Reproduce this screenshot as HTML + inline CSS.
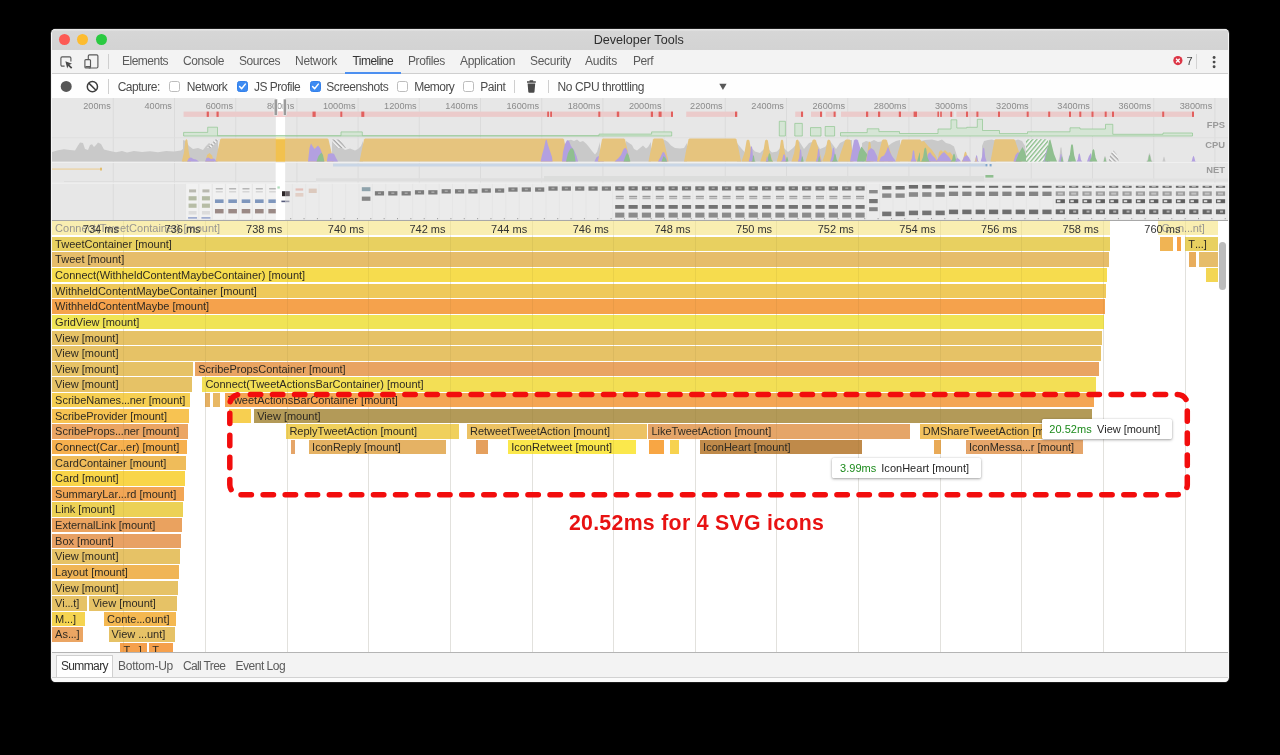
<!DOCTYPE html><html><head><meta charset="utf-8"><title>Developer Tools</title><style>
*{box-sizing:border-box}
html,body{margin:0;padding:0;background:#000;}
body{width:1280px;height:755px;position:relative;overflow:hidden;font-family:"Liberation Sans",sans-serif;}
#wbg{position:absolute;left:51.3px;top:28.8px;width:1177.6px;height:653.1px;background:#f6f6f6;border-radius:4.5px;box-shadow:0 0 0 0.8px #262626}
#win{position:absolute;left:52px;top:29px;width:1176px;height:652.7px;background:#fbfbfb;border-radius:4px;overflow:hidden;will-change:transform;}
.abs{position:absolute}
#title{position:absolute;left:0;top:0;width:1176px;height:20.5px;z-index:2;background:linear-gradient(#ebebeb,#d6d6d6 12%,#d3d3d3);}
#title .t{position:absolute;left:-1.3px;width:1176px;top:4px;text-align:center;font-size:12.6px;color:#2e2e2e;}
.tl{position:absolute;top:5px;width:10.9px;height:10.9px;border-radius:50%}
#tabs{position:absolute;left:0;top:20px;width:1176px;height:25px;background:#f3f3f3;border-bottom:1.2px solid #cfcfcf}
.tab{position:absolute;top:5.3px;font-size:12px;line-height:14px;color:#5a5a5a;white-space:nowrap}
#tbar{position:absolute;left:0;top:45px;width:1176px;height:24px;background:#fefefe;}
.tx{position:absolute;top:5.6px;font-size:12px;line-height:14px;color:#4c4c4c;white-space:nowrap}
.cb{position:absolute;top:7px;width:11px;height:11px;border:1px solid #bdbdbd;border-radius:2.5px;background:#fff}
.cb.on{background:#3d8bf2;border-color:#3380ea}
.div{position:absolute;width:1.2px;background:#cfcfcf}
#ov{position:absolute;left:0;top:69px;width:1176px;height:122px;background:#e7e7e7;}
#fl{position:absolute;left:0;top:191px;width:1176px;height:432px;background:#fff;overflow:hidden;}
.b{position:absolute;height:14.4px;font-size:11px;line-height:14.6px;color:#2e2a22;white-space:nowrap;overflow:hidden;padding-left:3.1px;}
.g{position:absolute;top:0;width:1px;height:432px;background:rgba(90,70,20,0.07)}
.g0{position:absolute;top:0;width:1.1px;height:432px;background:#ededed}
.b i{font-style:normal;letter-spacing:-0.25px;margin-right:.2px}
.rl{position:absolute;top:192.6px;font-size:11px;line-height:14px;color:#333;width:60px;text-align:right;white-space:nowrap}
#bot{position:absolute;left:0;top:622.5px;width:1176px;height:26.6px;background:#f3f3f3;border-top:1.2px solid #b4b4b4}
.bt{position:absolute;top:6.5px;font-size:12px;line-height:14px;color:#5a5a5a;white-space:nowrap}
.tip{position:absolute;background:#fff;border-radius:1.5px;box-shadow:0 1px 3px rgba(0,0,0,.34),0 0 1.5px rgba(0,0,0,.16);}
.tip span{position:absolute;font-size:11px;line-height:13px;white-space:nowrap;color:#262626}
</style></head><body>
<div id="wbg"></div>
<div id="win">
<div id="title"><div class="tl" style="left:6.85px;background:#fd5a55"></div><div class="tl" style="left:25.3px;background:#fdbc2f"></div><div class="tl" style="left:43.75px;background:#2aca41"></div><div class="t">Developer Tools</div></div>
<div id="tabs">
<svg class="abs" style="left:6px;top:3px" width="50" height="20" viewBox="58 52 50 20"><path d="M70.9 61.5V58.2a1.3 1.3 0 0 0-1.3-1.3h-7.4a1.3 1.3 0 0 0-1.3 1.3v6.6a1.3 1.3 0 0 0 1.3 1.3h2.4" fill="none" stroke="#5a5a5a" stroke-width="1.15"/><path d="M65.4 61.2l6.6 2.5-2.6 1 2.9 2.9-1.2 1.2-2.9-2.9-1 2.5z" fill="#4a4a4a"/><rect x="88.3" y="54.8" width="9.6" height="13.2" rx="1.2" fill="none" stroke="#5a5a5a" stroke-width="1.15"/><rect x="84.9" y="59.6" width="5.6" height="8.4" rx="1" fill="#f3f3f3" stroke="#5a5a5a" stroke-width="1.15"/><rect x="85.4" y="66" width="4.6" height="1.6" fill="#5a5a5a"/></svg>
<div class="div" style="left:56px;top:5px;height:14.5px"></div>
<div class="tab" style="left:70.0px;letter-spacing:-0.50px;">Elements</div>
<div class="tab" style="left:131.0px;letter-spacing:-0.43px;">Console</div>
<div class="tab" style="left:187.0px;letter-spacing:-0.43px;">Sources</div>
<div class="tab" style="left:243.0px;letter-spacing:-0.29px;">Network</div>
<div class="tab" style="left:300.5px;letter-spacing:-0.54px;color:#333;">Timeline</div>
<div class="tab" style="left:356.0px;letter-spacing:-0.38px;">Profiles</div>
<div class="tab" style="left:408.0px;letter-spacing:-0.34px;">Application</div>
<div class="tab" style="left:478.0px;letter-spacing:-0.29px;">Security</div>
<div class="tab" style="left:533.0px;letter-spacing:-0.23px;">Audits</div>
<div class="tab" style="left:581.0px;letter-spacing:-0.50px;">Perf</div>
<div class="abs" style="left:292.8px;top:23.3px;width:55.8px;height:1.9px;background:#4d90f0"></div>
<svg class="abs" style="left:1118px;top:3px" width="54" height="20" viewBox="1170 52 54 20"><circle cx="1177.9" cy="60.6" r="4.6" fill="#dc3545"/><path d="M1176.1 58.8l3.6 3.6M1179.7 58.8l-3.6 3.6" stroke="#fff" stroke-width="1.35"/><circle cx="1214.1" cy="57.5" r="1.45" fill="#4a4a4a"/><circle cx="1214.1" cy="62.1" r="1.45" fill="#4a4a4a"/><circle cx="1214.1" cy="66.7" r="1.45" fill="#4a4a4a"/></svg>
<div class="abs" style="left:1134.6px;top:5.6px;font-size:11px;line-height:13px;color:#444">7</div>
<div class="div" style="left:1144px;top:4.7px;height:15.3px;background:#d4d4d4"></div>
</div>
<div id="tbar">
<svg class="abs" style="left:6px;top:2px" width="44" height="20" viewBox="58 76 44 20"><circle cx="66.2" cy="86.4" r="5.5" fill="#565656"/><circle cx="92.4" cy="86.7" r="5.1" fill="none" stroke="#3e3e3e" stroke-width="1.5"/><path d="M88.8 83.1l7.2 7.2" stroke="#3e3e3e" stroke-width="1.5"/></svg>
<div class="div" style="left:56px;top:5px;height:14.6px"></div>
<div class="tx" style="left:65.7px;letter-spacing:-0.49px;">Capture:</div>
<div class="cb" style="left:117.0px"></div>
<div class="tx" style="left:134.8px;letter-spacing:-0.49px;">Network</div>
<div class="cb on" style="left:185.2px"><svg class="abs" style="left:-1px;top:-1px" width="11" height="11" viewBox="0 0 11 11"><path d="M2.6 5.6l2 2.1 3.7-4.6" fill="none" stroke="#fff" stroke-width="1.5" stroke-linecap="round" stroke-linejoin="round"/></svg></div>
<div class="tx" style="left:202.0px;letter-spacing:-0.51px;">JS Profile</div>
<div class="cb on" style="left:257.7px"><svg class="abs" style="left:-1px;top:-1px" width="11" height="11" viewBox="0 0 11 11"><path d="M2.6 5.6l2 2.1 3.7-4.6" fill="none" stroke="#fff" stroke-width="1.5" stroke-linecap="round" stroke-linejoin="round"/></svg></div>
<div class="tx" style="left:274.3px;letter-spacing:-0.43px;">Screenshots</div>
<div class="cb" style="left:345.3px"></div>
<div class="tx" style="left:362.3px;letter-spacing:-0.56px;">Memory</div>
<div class="cb" style="left:411.3px"></div>
<div class="tx" style="left:428.3px;letter-spacing:-0.47px;">Paint</div>
<div class="div" style="left:461.8px;top:5.6px;height:13.8px"></div>
<svg class="abs" style="left:472px;top:4px" width="16" height="16" viewBox="524 78 16 16"><path d="M529.6 80.2h3.6v1h2.6v1.6h-8.8v-1.6h2.6z" fill="#4a4a4a"/><path d="M527.6 83.6h7.6l-.7 8.2a1 1 0 0 1-1 .95h-4.2a1 1 0 0 1-1-.95z" fill="#4a4a4a"/></svg>
<div class="div" style="left:495.8px;top:5.6px;height:13.8px"></div>
<div class="tx" style="left:505.6px;letter-spacing:-0.41px;">No CPU throttling</div>
<svg class="abs" style="left:666px;top:8px" width="10" height="9" viewBox="718 82 10 9"><path d="M719.3 83.7h7.3l-3.65 6.4z" fill="#585858"/></svg>
</div>
<div id="ov"><svg class="abs" style="left:0;top:0" width="1176" height="122" viewBox="52 98 1176 122"><defs><pattern id="hg" width="3.2" height="3.2" patternUnits="userSpaceOnUse" patternTransform="rotate(-50)"><rect width="3.2" height="3.2" fill="#f2f2f2"/><rect width="3.2" height="1.3" fill="#8bbf8b"/></pattern><pattern id="hk" width="3.2" height="3.2" patternUnits="userSpaceOnUse" patternTransform="rotate(45)"><rect width="3.2" height="3.2" fill="#eeeeee"/><rect width="3.2" height="1.3" fill="#a8a8a8"/></pattern></defs><rect x="275.8" y="98" width="9.3" height="122" fill="#fff"/><rect x="112.8" y="98" width="1" height="122" fill="#dbdbdb"/><rect x="174.0" y="98" width="1" height="122" fill="#dbdbdb"/><rect x="235.2" y="98" width="1" height="122" fill="#dbdbdb"/><rect x="296.4" y="98" width="1" height="122" fill="#dbdbdb"/><rect x="357.6" y="98" width="1" height="122" fill="#dbdbdb"/><rect x="418.8" y="98" width="1" height="122" fill="#dbdbdb"/><rect x="480.0" y="98" width="1" height="122" fill="#dbdbdb"/><rect x="541.2" y="98" width="1" height="122" fill="#dbdbdb"/><rect x="602.4" y="98" width="1" height="122" fill="#dbdbdb"/><rect x="663.6" y="98" width="1" height="122" fill="#dbdbdb"/><rect x="724.8" y="98" width="1" height="122" fill="#dbdbdb"/><rect x="786.0" y="98" width="1" height="122" fill="#dbdbdb"/><rect x="847.2" y="98" width="1" height="122" fill="#dbdbdb"/><rect x="908.4" y="98" width="1" height="122" fill="#dbdbdb"/><rect x="969.6" y="98" width="1" height="122" fill="#dbdbdb"/><rect x="1030.8" y="98" width="1" height="122" fill="#dbdbdb"/><rect x="1092.0" y="98" width="1" height="122" fill="#dbdbdb"/><rect x="1153.2" y="98" width="1" height="122" fill="#dbdbdb"/><rect x="1214.4" y="98" width="1" height="122" fill="#dbdbdb"/><rect x="52" y="137.3" width="1176" height="0.9" fill="#dedede"/><rect x="52" y="162" width="1176" height="0.9" fill="#f1f1f1"/><rect x="183.6" y="111.6" width="489.3" height="5.3" fill="#ebcbcb"/><rect x="686.2" y="111.6" width="51.1" height="5.3" fill="#ebcbcb"/><rect x="795.2" y="111.6" width="8.2" height="5.3" fill="#ebcbcb"/><rect x="811" y="111.6" width="11.6" height="5.3" fill="#ebcbcb"/><rect x="825.7" y="111.6" width="10.5" height="5.3" fill="#ebcbcb"/><rect x="841" y="111.6" width="112.6" height="5.3" fill="#ebcbcb"/><rect x="956.4" y="111.6" width="237.3" height="5.3" fill="#ebcbcb"/><rect x="275.8" y="111.6" width="9.3" height="5.3" fill="#f7cfcf"/><rect x="206.7" y="111.6" width="2.2" height="5.3" fill="#e2605e"/><rect x="216.5" y="111.6" width="2.2" height="5.3" fill="#e2605e"/><rect x="312.5" y="111.6" width="3.2" height="5.3" fill="#e2605e"/><rect x="340.3" y="111.6" width="2" height="5.3" fill="#e2605e"/><rect x="361.3" y="111.6" width="3" height="5.3" fill="#e2605e"/><rect x="547.2" y="111.6" width="1.8" height="5.3" fill="#e2605e"/><rect x="550.2" y="111.6" width="1.8" height="5.3" fill="#e2605e"/><rect x="598.3" y="111.6" width="2" height="5.3" fill="#e2605e"/><rect x="616.8" y="111.6" width="2.4" height="5.3" fill="#e2605e"/><rect x="650.8" y="111.6" width="2.2" height="5.3" fill="#e2605e"/><rect x="658.6" y="111.6" width="3" height="5.3" fill="#e2605e"/><rect x="671" y="111.6" width="2" height="5.3" fill="#e2605e"/><rect x="735" y="111.6" width="2.2" height="5.3" fill="#e2605e"/><rect x="801" y="111.6" width="2" height="5.3" fill="#e2605e"/><rect x="820" y="111.6" width="2" height="5.3" fill="#e2605e"/><rect x="833.6" y="111.6" width="2" height="5.3" fill="#e2605e"/><rect x="866" y="111.6" width="2.2" height="5.3" fill="#e2605e"/><rect x="878" y="111.6" width="2.2" height="5.3" fill="#e2605e"/><rect x="898.8" y="111.6" width="2.2" height="5.3" fill="#e2605e"/><rect x="913.6" y="111.6" width="3.4" height="5.3" fill="#e2605e"/><rect x="937.4" y="111.6" width="1.6" height="5.3" fill="#e2605e"/><rect x="940.2" y="111.6" width="1.6" height="5.3" fill="#e2605e"/><rect x="950.3" y="111.6" width="1.8" height="5.3" fill="#e2605e"/><rect x="966" y="111.6" width="2" height="5.3" fill="#e2605e"/><rect x="976.4" y="111.6" width="2" height="5.3" fill="#e2605e"/><rect x="998" y="111.6" width="2" height="5.3" fill="#e2605e"/><rect x="1026.7" y="111.6" width="2" height="5.3" fill="#e2605e"/><rect x="1048.2" y="111.6" width="2" height="5.3" fill="#e2605e"/><rect x="1069" y="111.6" width="2" height="5.3" fill="#e2605e"/><rect x="1079.3" y="111.6" width="2" height="5.3" fill="#e2605e"/><rect x="1091.5" y="111.6" width="2" height="5.3" fill="#e2605e"/><rect x="1104.7" y="111.6" width="2" height="5.3" fill="#e2605e"/><rect x="1112" y="111.6" width="2" height="5.3" fill="#e2605e"/><rect x="1162.2" y="111.6" width="2" height="5.3" fill="#e2605e"/><rect x="1192" y="111.6" width="2" height="5.3" fill="#e2605e"/><path d="M183.6 136.0V132.4H207.7V127.2H217.5V135.7H341V131.9H362.3V135.7H599V134.1H651.6V131.9H671.7V136.0Z" fill="#d5e5d5" stroke="#8fc58f" stroke-width="0.7"/><path d="M779.3 136.0V121.3H785.4V136.0Z" fill="#d5e5d5" stroke="#8fc58f" stroke-width="0.7"/><path d="M794.8 136.0V123.4H802.3V136.0Z" fill="#d5e5d5" stroke="#8fc58f" stroke-width="0.7"/><path d="M810.5 136.0V127.6H821V136.0Z" fill="#d5e5d5" stroke="#8fc58f" stroke-width="0.7"/><path d="M825.2 136.0V126.5H834.6V136.0Z" fill="#d5e5d5" stroke="#8fc58f" stroke-width="0.7"/><path d="M840.5 136.0V132.6H867.2V128.8H878.9V131.6H899.5V133.5H938V129H951V119.8H956.8V128H966.8V127.3H977.3V119.3H982.5V130.5H999.5V133.6H1027.5V131.8H1070V127.8H1080V129H1105.5V124.3H1112.8V134.3H1163V133H1192.5V136.0Z" fill="#d5e5d5" stroke="#8fc58f" stroke-width="0.7"/><path d="M52.0 161.6 L52.0 152.0 L58.0 150.2 L64.0 149.3 L70.0 150.0 L75.0 150.4 L78.0 145.5 L80.0 142.6 L83.0 143.0 L85.0 149.0 L88.0 150.0 L90.0 145.0 L92.0 144.2 L94.0 147.0 L96.0 145.0 L98.0 142.4 L101.0 144.0 L104.0 149.5 L110.0 151.0 L116.0 152.2 L122.0 151.0 L127.0 152.6 L134.0 151.0 L142.0 152.0 L150.0 151.3 L158.0 152.2 L166.0 151.0 L174.0 151.6 L181.0 150.6 L184.0 148.0 L184.0 161.6Z" fill="#c9c9c9"/><path d="M183.0 161.6 L183.0 140.0 L186.0 141.0 L189.0 146.0 L193.0 149.0 L198.0 148.0 L203.0 150.0 L206.0 146.0 L209.0 143.0 L212.0 145.0 L215.0 142.0 L218.0 139.5 L218.0 161.6Z" fill="#c9c9c9"/><path d="M332.0 161.6 L332.0 140.0 L336.0 141.0 L340.0 146.0 L345.0 150.0 L350.0 148.5 L355.0 150.5 L358.0 149.0 L361.0 146.0 L363.0 141.0 L363.0 161.6Z" fill="#c9c9c9"/><path d="M567.0 161.6 L567.0 140.5 L571.0 139.8 L574.0 141.0 L577.0 139.6 L580.0 142.0 L583.0 141.0 L586.0 143.5 L589.0 147.0 L592.0 151.0 L595.0 154.5 L597.0 152.0 L600.0 142.0 L600.0 161.6Z" fill="#c9c9c9"/><path d="M626.0 161.6 L626.0 141.0 L629.0 143.0 L632.0 145.0 L634.0 149.0 L637.0 150.5 L640.0 148.0 L643.0 145.5 L646.0 148.5 L648.0 147.0 L651.0 142.0 L651.0 161.6Z" fill="#c9c9c9"/><path d="M662.0 161.6 L662.0 140.5 L665.0 140.0 L668.0 142.0 L671.0 145.5 L675.0 148.0 L680.0 148.6 L684.0 148.0 L687.0 143.0 L687.0 161.6Z" fill="#c9c9c9"/><path d="M737.0 161.6 L737.0 143.0 L741.0 148.0 L745.0 152.5 L750.0 146.0 L755.0 151.5 L760.0 153.0 L766.0 147.0 L772.0 152.5 L777.0 151.5 L782.0 146.0 L788.0 152.0 L793.0 148.0 L799.0 141.0 L804.0 149.0 L809.0 143.0 L815.0 141.0 L820.0 149.0 L825.0 147.0 L830.0 141.0 L836.0 149.0 L840.0 143.0 L846.0 140.0 L852.0 140.0 L852.0 161.6Z" fill="#c9c9c9"/><path d="M862.0 161.6 L862.0 143.0 L866.0 141.0 L870.0 142.0 L874.0 140.0 L878.0 142.0 L884.0 141.0 L884.0 161.6Z" fill="#c9c9c9"/><path d="M888.0 161.6 L888.0 146.0 L892.0 143.0 L896.0 141.0 L900.0 140.0 L900.0 161.6Z" fill="#c9c9c9"/><path d="M921.0 161.6 L921.0 141.0 L925.0 140.0 L932.0 139.6 L938.0 141.0 L942.0 139.4 L946.0 143.0 L950.0 144.0 L954.0 146.5 L957.0 156.0 L959.0 161.6 L959.0 161.6Z" fill="#c9c9c9"/><path d="M982.0 161.6 L982.0 146.0 L984.0 141.0 L988.0 140.0 L992.0 139.6 L996.0 141.0 L996.0 161.6Z" fill="#c9c9c9"/><path d="M1014.0 161.6 L1014.0 141.0 L1018.0 139.4 L1022.0 141.0 L1025.0 146.0 L1027.0 161.6 L1027.0 161.6Z" fill="#c9c9c9"/><path d="M1058.2 161.6 L1059.5 156.8 L1060.4 148.2 L1061.0 147.0 L1061.6 148.2 L1062.5 156.8 L1063.8 161.6Z" fill="#c9c9c9"/><path d="M1102.0 161.6 L1103.3 161.2 L1104.3 157.0 L1105.0 155.8 L1105.7 157.0 L1106.7 161.2 L1108.0 161.6Z" fill="#c9c9c9"/><path d="M1146.1 161.6 L1147.6 159.8 L1148.8 154.2 L1149.5 153.0 L1150.2 154.2 L1151.4 159.8 L1152.9 161.6Z" fill="#c9c9c9"/><path d="M1161.2 161.6 L1162.5 161.6 L1163.4 157.8 L1164.0 156.6 L1164.6 157.8 L1165.5 161.6 L1166.8 161.6Z" fill="#c9c9c9"/><path d="M181.8 161.6 L183.9 152.8 L185.4 140.2 L186.4 139.0 L187.4 140.2 L188.9 152.8 L191.0 161.6Z" fill="#e6c47e"/><path d="M205.6 161.6 L205.6 161.6 L207.0 155.0 L209.5 153.0 L212.0 155.5 L214.0 161.6 L214.0 161.6Z" fill="#e6c47e"/><path d="M207.0 148.0 L216.0 139.0 L219.5 139.0 L211.0 148.0Z" fill="url(#hk)"/><path d="M187.0 161.6 L187.0 161.6 L189.0 158.0 L191.0 157.4 L193.5 159.0 L196.0 159.6 L199.0 161.6 L199.0 161.6Z" fill="#b3a0e0"/><path d="M205.0 161.6 L205.0 161.6 L206.5 158.0 L208.5 157.4 L211.0 159.0 L214.0 158.6 L217.0 161.6 L217.0 161.6Z" fill="#b3a0e0"/><path d="M215.6 161.6 L217.9 150.0 L220.2 139.4 L221.2 138.4 L327.5 138.4 L328.5 139.4 L331.0 150.0 L333.5 161.6Z" fill="#e6c47e"/><path d="M308.0 161.6 L308.0 161.6 L309.5 148.0 L311.0 143.5 L312.5 146.0 L314.5 149.0 L316.5 147.0 L318.0 145.5 L320.0 148.0 L322.0 153.0 L324.3 161.6 L324.3 161.6Z" fill="#b3a0e0"/><path d="M316.5 161.6 L316.5 161.6 L318.5 156.0 L321.4 152.4 L323.0 155.0 L324.3 161.6 L324.3 161.6Z" fill="#8fbf8f"/><path d="M326.8 161.6 L326.8 161.6 L328.0 154.0 L331.0 153.2 L334.0 153.8 L336.0 158.0 L338.0 161.6 L338.0 161.6Z" fill="#b3a0e0"/><path d="M331.0 139.5 L340.0 139.5 L346.0 148.0 L337.0 148.0Z" fill="url(#hk)"/><path d="M359.5 161.6 L361.8 150.0 L364.0 139.4 L365.0 138.4 L563.0 138.4 L564.0 139.4 L566.0 150.0 L568.0 161.6Z" fill="#e6c47e"/><path d="M540.6 161.6 L540.6 161.6 L542.0 155.0 L544.0 148.0 L545.6 140.5 L546.6 139.6 L548.0 145.0 L550.0 151.0 L552.0 157.0 L552.6 161.6 L552.6 161.6Z" fill="#b3a0e0"/><path d="M562.0 161.6 L562.0 161.6 L563.0 152.0 L565.0 144.0 L567.0 140.2 L569.0 141.0 L571.0 146.0 L574.0 150.0 L576.5 156.0 L578.0 161.6 L578.0 161.6Z" fill="#b3a0e0"/><path d="M566.0 161.6 L566.0 161.6 L568.0 153.0 L570.5 148.6 L572.5 148.2 L574.0 151.0 L575.6 161.6 L575.6 161.6Z" fill="#8fbf8f"/><path d="M594.5 161.6 L594.5 161.6 L596.5 157.2 L598.5 156.0 L601.0 158.5 L604.0 161.6 L604.0 161.6Z" fill="#b3a0e0"/><path d="M598.0 161.6 L600.0 150.0 L602.0 139.4 L603.0 138.4 L624.0 138.4 L625.0 139.4 L627.5 150.0 L630.0 161.6Z" fill="#e6c47e"/><path d="M614.5 161.6 L614.5 161.6 L618.0 158.5 L621.0 155.0 L623.5 149.0 L625.5 147.8 L627.0 150.0 L628.5 156.0 L629.5 161.6 L629.5 161.6Z" fill="#b3a0e0"/><path d="M623.5 161.6 L623.5 161.6 L625.5 156.0 L627.0 152.8 L628.6 155.0 L630.4 161.6 L630.4 161.6Z" fill="#8fbf8f"/><path d="M648.5 161.6 L650.8 150.0 L653.0 139.4 L654.0 138.4 L662.5 138.4 L663.5 139.4 L666.0 150.0 L668.5 161.6Z" fill="#e6c47e"/><path d="M658.0 161.6 L658.0 161.6 L660.5 157.0 L662.5 152.6 L664.0 152.0 L665.5 155.0 L667.5 161.6 L667.5 161.6Z" fill="#b3a0e0"/><path d="M661.5 161.6 L661.5 161.6 L663.6 156.0 L665.5 158.0 L667.0 161.6 L667.0 161.6Z" fill="#8fbf8f"/><path d="M684.0 161.6 L686.2 150.0 L688.5 139.4 L689.5 138.4 L735.5 138.4 L736.5 139.4 L738.8 150.0 L741.0 161.6Z" fill="#e6c47e"/><path d="M741.5 161.6 L744.4 153.0 L746.6 140.6 L748.0 139.4 L749.4 140.6 L751.6 153.0 L754.5 161.6Z" fill="#e6c47e"/><path d="M748.7 161.6 L750.0 156.3 L750.9 147.2 L751.5 146.0 L752.1 147.2 L753.0 156.3 L754.3 161.6Z" fill="#b3a0e0"/><path d="M751.3 161.6 L752.3 160.8 L753.0 156.2 L753.5 155.0 L754.0 156.2 L754.7 160.8 L755.7 161.6Z" fill="#8fbf8f"/><path d="M760.3 161.6 L763.1 153.0 L765.1 140.6 L766.5 139.4 L767.9 140.6 L769.9 153.0 L772.7 161.6Z" fill="#e6c47e"/><path d="M765.9 161.6 L767.5 159.8 L768.7 154.2 L769.5 153.0 L770.3 154.2 L771.5 159.8 L773.1 161.6Z" fill="#8fbf8f"/><path d="M765.2 161.6 L766.1 161.3 L766.8 157.2 L767.2 156.0 L767.6 157.2 L768.3 161.3 L769.2 161.6Z" fill="#b3a0e0"/><path d="M776.8 161.6 L779.1 153.0 L780.9 140.6 L782.0 139.4 L783.1 140.6 L784.9 153.0 L787.2 161.6Z" fill="#e6c47e"/><path d="M780.5 161.6 L782.1 160.3 L783.2 155.2 L784.0 154.0 L784.8 155.2 L785.9 160.3 L787.5 161.6Z" fill="#b3a0e0"/><path d="M784.4 161.6 L785.6 161.6 L786.4 157.7 L787.0 156.5 L787.6 157.7 L788.4 161.6 L789.6 161.6Z" fill="#8fbf8f"/><path d="M791.5 161.6 L794.1 153.0 L796.0 140.6 L797.3 139.4 L798.6 140.6 L800.5 153.0 L803.1 161.6Z" fill="#e6c47e"/><path d="M797.9 161.6 L799.1 157.8 L799.9 150.2 L800.5 149.0 L801.1 150.2 L801.9 157.8 L803.1 161.6Z" fill="#b3a0e0"/><path d="M799.9 161.6 L801.0 161.3 L801.8 157.2 L802.3 156.0 L802.8 157.2 L803.6 161.3 L804.7 161.6Z" fill="#8fbf8f"/><path d="M805.5 161.6 L809.0 150.6 L812.5 140.6 L813.5 139.6 L815.0 139.6 L816.0 140.6 L819.0 150.6 L822.0 161.6Z" fill="#e6c47e"/><path d="M815.8 161.6 L817.1 157.6 L818.0 149.7 L818.6 148.5 L819.2 149.7 L820.1 157.6 L821.4 161.6Z" fill="#b3a0e0"/><path d="M817.0 161.6 L818.0 161.3 L818.7 157.2 L819.2 156.0 L819.7 157.2 L820.4 161.3 L821.4 161.6Z" fill="#8fbf8f"/><path d="M822.3 161.6 L825.2 153.0 L827.4 140.6 L828.8 139.4 L830.2 140.6 L832.4 153.0 L835.3 161.6Z" fill="#e6c47e"/><path d="M830.0 161.6 L831.5 157.1 L832.7 148.7 L833.4 147.5 L834.1 148.7 L835.3 157.1 L836.8 161.6Z" fill="#b3a0e0"/><path d="M831.8 161.6 L833.2 160.1 L834.3 154.7 L835.0 153.5 L835.7 154.7 L836.8 160.1 L838.2 161.6Z" fill="#8fbf8f"/><path d="M838.0 161.6 L841.5 150.6 L845.0 140.6 L846.0 139.6 L849.5 139.6 L850.5 140.6 L852.0 150.6 L853.5 161.6Z" fill="#e6c47e"/><path d="M850.0 161.6 L852.0 150.5 L854.0 140.4 L855.0 139.4 L857.0 139.4 L858.0 140.4 L861.0 150.5 L864.0 161.6Z" fill="#b3a0e0"/><path d="M857.0 161.6 L857.0 161.6 L859.0 152.0 L861.5 146.5 L864.0 150.0 L867.0 154.0 L870.5 161.6 L870.5 161.6Z" fill="#8fbf8f"/><path d="M865.5 161.6 L867.3 154.1 L868.6 142.7 L869.5 141.5 L870.4 142.7 L871.7 154.1 L873.5 161.6Z" fill="#e6c47e"/><path d="M866.0 161.6 L866.0 161.6 L868.0 151.0 L871.0 148.0 L874.0 150.0 L877.0 156.0 L878.5 161.6 L878.5 161.6Z" fill="#b3a0e0"/><path d="M877.0 161.6 L879.5 150.5 L882.0 140.4 L883.0 139.4 L886.0 139.4 L887.0 140.4 L890.0 150.5 L893.0 161.6Z" fill="#e6c47e"/><path d="M879.0 161.6 L879.0 161.6 L881.0 157.0 L884.0 155.5 L886.0 152.0 L888.0 146.5 L890.0 152.0 L892.0 156.0 L896.0 161.6 L896.0 161.6Z" fill="#b3a0e0"/><path d="M895.5 161.6 L898.5 150.5 L901.5 140.4 L902.5 139.4 L920.0 139.4 L921.0 140.4 L924.0 150.5 L927.0 161.6Z" fill="#e6c47e"/><path d="M910.5 161.6 L911.9 158.3 L912.8 151.2 L913.5 150.0 L914.2 151.2 L915.1 158.3 L916.5 161.6Z" fill="#b3a0e0"/><path d="M917.0 161.6 L917.0 161.6 L919.5 153.0 L922.5 148.0 L925.0 152.0 L928.0 155.0 L931.0 161.6 L931.0 161.6Z" fill="#8fbf8f"/><path d="M920.0 161.6 L920.0 142.0 L924.0 141.0 L928.0 146.0 L932.0 150.0 L936.0 156.0 L938.0 161.6 L938.0 161.6Z" fill="#e6c47e"/><path d="M937.5 161.6 L937.5 161.6 L939.0 152.0 L941.0 150.0 L943.0 152.0 L945.0 150.0 L948.0 153.0 L950.0 152.0 L953.0 156.0 L955.0 161.6 L955.0 161.6Z" fill="#e6c47e"/><path d="M926.0 161.6 L926.0 161.6 L928.0 154.0 L930.0 152.0 L932.0 155.0 L935.0 158.0 L937.0 161.6 L937.0 161.6Z" fill="#b3a0e0"/><path d="M921.3 161.6 L923.1 157.1 L924.4 148.7 L925.3 147.5 L926.2 148.7 L927.5 157.1 L929.3 161.6Z" fill="#8fbf8f"/><path d="M936.0 161.6 L936.0 161.6 L939.0 157.0 L942.0 153.5 L944.0 152.0 L946.0 154.0 L949.0 157.0 L952.0 161.6 L952.0 161.6Z" fill="#b3a0e0"/><path d="M950.4 161.6 L952.0 160.1 L953.2 154.7 L954.0 153.5 L954.8 154.7 L956.0 160.1 L957.6 161.6Z" fill="#8fbf8f"/><path d="M955.0 161.6 L955.0 161.6 L957.0 158.0 L959.0 159.0 L961.0 161.6 L961.0 161.6Z" fill="#b3a0e0"/><path d="M961.3 161.6 L963.2 159.1 L964.6 152.7 L965.5 151.5 L966.4 152.7 L967.8 159.1 L969.7 161.6Z" fill="#e6c47e"/><path d="M962.0 161.6 L962.0 161.6 L964.0 157.0 L967.0 155.0 L969.0 157.5 L971.0 161.6 L971.0 161.6Z" fill="#b3a0e0"/><path d="M974.0 161.6 L975.2 160.8 L976.0 156.2 L976.6 155.0 L977.2 156.2 L978.0 160.8 L979.2 161.6Z" fill="#b3a0e0"/><path d="M974.6 161.6 L975.2 161.8 L975.7 158.2 L976.0 157.0 L976.3 158.2 L976.8 161.8 L977.4 161.6Z" fill="#e6c47e"/><path d="M980.6 161.6 L982.0 157.1 L982.9 148.7 L983.6 147.5 L984.3 148.7 L985.2 157.1 L986.6 161.6Z" fill="#b3a0e0"/><path d="M990.5 161.6 L992.5 150.4 L994.5 140.2 L995.5 139.2 L1014.0 139.2 L1015.0 140.2 L1018.5 150.4 L1022.0 161.6Z" fill="#e6c47e"/><path d="M1013.5 161.6 L1013.5 161.6 L1015.5 155.0 L1018.0 152.0 L1020.0 154.0 L1021.0 161.6 L1021.0 161.6Z" fill="#b3a0e0"/><path d="M1015.5 161.6 L1015.5 161.6 L1019.0 153.0 L1022.5 147.0 L1025.0 152.0 L1027.5 161.6 L1027.5 161.6Z" fill="#8fbf8f"/><rect x="1026" y="139.2" width="22" height="22.4" fill="url(#hg)"/><path d="M1043.5 161.6 L1043.5 161.6 L1045.5 154.0 L1047.0 149.0 L1049.0 146.0 L1050.0 161.6 L1050.0 161.6Z" fill="#b3a0e0"/><path d="M1044.5 161.6 L1044.5 161.6 L1047.0 151.0 L1049.3 140.2 L1050.3 139.6 L1051.5 144.0 L1054.0 154.0 L1057.0 161.6 L1057.0 161.6Z" fill="#8fbf8f"/><path d="M1058.6 161.6 L1059.7 160.1 L1060.5 154.7 L1061.0 153.5 L1061.5 154.7 L1062.3 160.1 L1063.4 161.6Z" fill="#b3a0e0"/><path d="M1060.0 161.6 L1060.9 161.3 L1061.6 157.2 L1062.0 156.0 L1062.4 157.2 L1063.1 161.3 L1064.0 161.6Z" fill="#8fbf8f"/><path d="M1067.1 161.6 L1068.2 160.8 L1069.0 156.2 L1069.5 155.0 L1070.0 156.2 L1070.8 160.8 L1071.9 161.6Z" fill="#b3a0e0"/><path d="M1068.0 161.6 L1069.8 155.3 L1071.1 145.2 L1072.0 144.0 L1072.9 145.2 L1074.2 155.3 L1076.0 161.6Z" fill="#8fbf8f"/><path d="M1076.3 161.6 L1077.6 159.9 L1078.6 154.4 L1079.3 153.2 L1080.0 154.4 L1081.0 159.9 L1082.3 161.6Z" fill="#b3a0e0"/><path d="M1087.0 161.6 L1087.0 161.6 L1089.0 156.0 L1091.0 153.0 L1092.0 161.6 L1092.0 161.6Z" fill="#b3a0e0"/><path d="M1089.4 161.6 L1091.2 157.8 L1092.5 150.2 L1093.4 149.0 L1094.3 150.2 L1095.6 157.8 L1097.4 161.6Z" fill="#8fbf8f"/><path d="M1102.8 161.6 L1103.8 161.8 L1104.5 158.2 L1105.0 157.0 L1105.5 158.2 L1106.2 161.8 L1107.2 161.6Z" fill="#8fbf8f"/><path d="M1108.5 161.6 L1110.5 154.0 L1113.5 150.6 L1116.5 154.0 L1119.0 161.6Z" fill="url(#hk)"/><path d="M1146.9 161.6 L1148.1 160.6 L1148.9 155.7 L1149.5 154.5 L1150.1 155.7 L1150.9 160.6 L1152.1 161.6Z" fill="#8fbf8f"/><path d="M1190.3 161.6 L1191.7 161.2 L1192.8 157.0 L1193.5 155.8 L1194.2 157.0 L1195.3 161.2 L1196.7 161.6Z" fill="#b3a0e0"/><rect x="275.8" y="138.4" width="9.3" height="23.2" fill="#f2c14e"/><rect x="275.8" y="137.5" width="9.3" height="1.7" fill="#fbf0a6"/><rect x="52" y="168.4" width="49" height="1.4" fill="#ead3a6"/><rect x="100" y="167.7" width="2" height="2.8" fill="#e2bd6e"/><rect x="333" y="163.6" width="652" height="2.9" fill="#c9d6e6"/><rect x="985.4" y="164" width="2" height="2.4" fill="#7fa6cf"/><rect x="989.6" y="164" width="2" height="2.4" fill="#7fa6cf"/><rect x="316" y="178.2" width="228" height="3.2" fill="#dedede"/><rect x="544" y="176" width="440" height="5.4" fill="#dcdddc"/><rect x="984" y="178.4" width="244" height="3" fill="#e1e1e1"/><rect x="64" y="181.2" width="252" height="0.8" fill="#dcdcdc"/><rect x="985.4" y="175" width="8" height="2.6" fill="#8fbf8f"/><rect x="185.6" y="183.8" width="1042.4" height="36.2" fill="#e6e6e6"/><rect x="186.10" y="183.8" width="12.15" height="35.6" fill="#ebebeb"/><rect x="196.75" y="218.2" width="1" height="1" fill="#8c8c8c"/><rect x="186.10" y="183.8" width="12.15" height="35.6" fill="#f1f1f1"/><rect x="189.08" y="189.4" width="7" height="3" fill="#b9b9b0"/><rect x="188.58" y="196.2" width="8" height="4.2" fill="#b4bba4"/><rect x="188.58" y="203.6" width="8" height="4.2" fill="#b7bda6"/><rect x="188.58" y="211" width="8" height="3.6" fill="#dcdcdc"/><rect x="188.08" y="217.2" width="9" height="1.4" fill="#8c9cc8"/><rect x="199.45" y="183.8" width="12.15" height="35.6" fill="#ebebeb"/><rect x="210.10" y="218.2" width="1" height="1" fill="#8c8c8c"/><rect x="199.45" y="183.8" width="12.15" height="35.6" fill="#f1f1f1"/><rect x="202.43" y="189.4" width="7" height="3" fill="#b9b9b0"/><rect x="201.93" y="196.2" width="8" height="4.2" fill="#b4bba4"/><rect x="201.93" y="203.6" width="8" height="4.2" fill="#b7bda6"/><rect x="201.93" y="211" width="8" height="3.6" fill="#dcdcdc"/><rect x="201.43" y="217.2" width="9" height="1.4" fill="#8c9cc8"/><rect x="212.80" y="183.8" width="12.15" height="35.6" fill="#ebebeb"/><rect x="223.45" y="218.2" width="1" height="1" fill="#8c8c8c"/><rect x="212.80" y="183.8" width="12.15" height="35.6" fill="#f1f1f1"/><rect x="215.78" y="188.2" width="7" height="1.2" fill="#a9a9a9"/><rect x="215.78" y="191.4" width="7" height="0.9" fill="#c4c4c4"/><rect x="214.97" y="199.4" width="8.6" height="3.6" fill="#7f97bd"/><rect x="214.97" y="209" width="8.6" height="4.4" fill="#9b8a86"/><rect x="226.15" y="183.8" width="12.15" height="35.6" fill="#ebebeb"/><rect x="236.80" y="218.2" width="1" height="1" fill="#8c8c8c"/><rect x="226.15" y="183.8" width="12.15" height="35.6" fill="#f1f1f1"/><rect x="229.12" y="188.2" width="7" height="1.2" fill="#a9a9a9"/><rect x="229.12" y="191.4" width="7" height="0.9" fill="#c4c4c4"/><rect x="228.32" y="199.4" width="8.6" height="3.6" fill="#7f97bd"/><rect x="228.32" y="209" width="8.6" height="4.4" fill="#9b8a86"/><rect x="239.50" y="183.8" width="12.15" height="35.6" fill="#ebebeb"/><rect x="250.15" y="218.2" width="1" height="1" fill="#8c8c8c"/><rect x="239.50" y="183.8" width="12.15" height="35.6" fill="#f1f1f1"/><rect x="242.48" y="188.2" width="7" height="1.2" fill="#a9a9a9"/><rect x="242.48" y="191.4" width="7" height="0.9" fill="#c4c4c4"/><rect x="241.68" y="199.4" width="8.6" height="3.6" fill="#7f97bd"/><rect x="241.68" y="209" width="8.6" height="4.4" fill="#9b8a86"/><rect x="252.85" y="183.8" width="12.15" height="35.6" fill="#ebebeb"/><rect x="263.50" y="218.2" width="1" height="1" fill="#8c8c8c"/><rect x="252.85" y="183.8" width="12.15" height="35.6" fill="#f1f1f1"/><rect x="255.82" y="188.2" width="7" height="1.2" fill="#a9a9a9"/><rect x="255.82" y="191.4" width="7" height="0.9" fill="#c4c4c4"/><rect x="255.02" y="199.4" width="8.6" height="3.6" fill="#7f97bd"/><rect x="255.02" y="209" width="8.6" height="4.4" fill="#9b8a86"/><rect x="266.20" y="183.8" width="12.15" height="35.6" fill="#ebebeb"/><rect x="276.85" y="218.2" width="1" height="1" fill="#8c8c8c"/><rect x="266.20" y="183.8" width="12.15" height="35.6" fill="#f1f1f1"/><rect x="269.18" y="188.2" width="7" height="1.2" fill="#a9a9a9"/><rect x="269.18" y="191.4" width="7" height="0.9" fill="#c4c4c4"/><rect x="268.38" y="199.4" width="8.6" height="3.6" fill="#7f97bd"/><rect x="268.38" y="209" width="8.6" height="4.4" fill="#9b8a86"/><rect x="279.55" y="183.8" width="12.15" height="35.6" fill="#ebebeb"/><rect x="290.20" y="218.2" width="1" height="1" fill="#8c8c8c"/><rect x="292.90" y="183.8" width="12.15" height="35.6" fill="#ebebeb"/><rect x="303.55" y="218.2" width="1" height="1" fill="#8c8c8c"/><rect x="295.57" y="188.4" width="7.6" height="2.2" fill="#e3bfb8"/><rect x="295.38" y="193" width="8" height="3.6" fill="#e2cfc6"/><rect x="306.25" y="183.8" width="12.15" height="35.6" fill="#ebebeb"/><rect x="316.90" y="218.2" width="1" height="1" fill="#8c8c8c"/><rect x="308.73" y="188.6" width="8" height="4.4" fill="#dcc9bd"/><rect x="319.60" y="183.8" width="12.15" height="35.6" fill="#ebebeb"/><rect x="330.25" y="218.2" width="1" height="1" fill="#8c8c8c"/><rect x="332.95" y="183.8" width="12.15" height="35.6" fill="#ebebeb"/><rect x="343.60" y="218.2" width="1" height="1" fill="#8c8c8c"/><rect x="346.30" y="183.8" width="12.15" height="35.6" fill="#ebebeb"/><rect x="356.95" y="218.2" width="1" height="1" fill="#8c8c8c"/><rect x="359.65" y="183.8" width="12.15" height="35.6" fill="#ebebeb"/><rect x="370.30" y="218.2" width="1" height="1" fill="#8c8c8c"/><rect x="361.82" y="187.2" width="8.6" height="4" fill="#8fa3ac"/><rect x="361.82" y="196.6" width="8.6" height="4.2" fill="#868686"/><rect x="373.00" y="183.8" width="12.15" height="35.6" fill="#ebebeb"/><rect x="383.65" y="218.2" width="1" height="1" fill="#8c8c8c"/><rect x="374.88" y="191.2" width="9.2" height="4.3" fill="#7c7c7c"/><rect x="377.98" y="192.39999999999998" width="3" height="1.6" fill="#a8a8a8"/><rect x="386.35" y="183.8" width="12.15" height="35.6" fill="#ebebeb"/><rect x="397.00" y="218.2" width="1" height="1" fill="#8c8c8c"/><rect x="388.23" y="191.2" width="9.2" height="4.3" fill="#7c7c7c"/><rect x="391.33" y="192.39999999999998" width="3" height="1.6" fill="#a8a8a8"/><rect x="399.70" y="183.8" width="12.15" height="35.6" fill="#ebebeb"/><rect x="410.35" y="218.2" width="1" height="1" fill="#8c8c8c"/><rect x="401.57" y="191.2" width="9.2" height="4.3" fill="#7c7c7c"/><rect x="404.68" y="192.39999999999998" width="3" height="1.6" fill="#a8a8a8"/><rect x="413.05" y="183.8" width="12.15" height="35.6" fill="#ebebeb"/><rect x="423.70" y="218.2" width="1" height="1" fill="#8c8c8c"/><rect x="414.92" y="190.2" width="9.2" height="4.3" fill="#7c7c7c"/><rect x="418.02" y="191.39999999999998" width="3" height="1.6" fill="#a8a8a8"/><rect x="426.40" y="183.8" width="12.15" height="35.6" fill="#ebebeb"/><rect x="437.05" y="218.2" width="1" height="1" fill="#8c8c8c"/><rect x="428.27" y="190.2" width="9.2" height="4.3" fill="#7c7c7c"/><rect x="431.38" y="191.39999999999998" width="3" height="1.6" fill="#a8a8a8"/><rect x="439.75" y="183.8" width="12.15" height="35.6" fill="#ebebeb"/><rect x="450.40" y="218.2" width="1" height="1" fill="#8c8c8c"/><rect x="441.62" y="189.2" width="9.2" height="4.3" fill="#7c7c7c"/><rect x="444.73" y="190.39999999999998" width="3" height="1.6" fill="#a8a8a8"/><rect x="453.10" y="183.8" width="12.15" height="35.6" fill="#ebebeb"/><rect x="463.75" y="218.2" width="1" height="1" fill="#8c8c8c"/><rect x="454.98" y="189.2" width="9.2" height="4.3" fill="#7c7c7c"/><rect x="458.08" y="190.39999999999998" width="3" height="1.6" fill="#a8a8a8"/><rect x="466.45" y="183.8" width="12.15" height="35.6" fill="#ebebeb"/><rect x="477.10" y="218.2" width="1" height="1" fill="#8c8c8c"/><rect x="468.32" y="189.2" width="9.2" height="4.3" fill="#7c7c7c"/><rect x="471.42" y="190.39999999999998" width="3" height="1.6" fill="#a8a8a8"/><rect x="479.80" y="183.8" width="12.15" height="35.6" fill="#ebebeb"/><rect x="490.45" y="218.2" width="1" height="1" fill="#8c8c8c"/><rect x="481.67" y="188.4" width="9.2" height="4.3" fill="#7c7c7c"/><rect x="484.77" y="189.6" width="3" height="1.6" fill="#a8a8a8"/><rect x="493.15" y="183.8" width="12.15" height="35.6" fill="#ebebeb"/><rect x="503.80" y="218.2" width="1" height="1" fill="#8c8c8c"/><rect x="495.02" y="188.4" width="9.2" height="4.3" fill="#7c7c7c"/><rect x="498.12" y="189.6" width="3" height="1.6" fill="#a8a8a8"/><rect x="506.50" y="183.8" width="12.15" height="35.6" fill="#ebebeb"/><rect x="517.15" y="218.2" width="1" height="1" fill="#8c8c8c"/><rect x="508.37" y="187.4" width="9.2" height="4.3" fill="#7c7c7c"/><rect x="511.47" y="188.6" width="3" height="1.6" fill="#a8a8a8"/><rect x="519.85" y="183.8" width="12.15" height="35.6" fill="#ebebeb"/><rect x="530.50" y="218.2" width="1" height="1" fill="#8c8c8c"/><rect x="521.72" y="187.4" width="9.2" height="4.3" fill="#7c7c7c"/><rect x="524.82" y="188.6" width="3" height="1.6" fill="#a8a8a8"/><rect x="533.20" y="183.8" width="12.15" height="35.6" fill="#ebebeb"/><rect x="543.85" y="218.2" width="1" height="1" fill="#8c8c8c"/><rect x="535.07" y="187.4" width="9.2" height="4.3" fill="#7c7c7c"/><rect x="538.17" y="188.6" width="3" height="1.6" fill="#a8a8a8"/><rect x="546.55" y="183.8" width="12.15" height="35.6" fill="#ebebeb"/><rect x="557.20" y="218.2" width="1" height="1" fill="#8c8c8c"/><rect x="548.42" y="186.4" width="9.2" height="4.3" fill="#7c7c7c"/><rect x="551.52" y="187.6" width="3" height="1.6" fill="#a8a8a8"/><rect x="559.90" y="183.8" width="12.15" height="35.6" fill="#ebebeb"/><rect x="570.55" y="218.2" width="1" height="1" fill="#8c8c8c"/><rect x="561.77" y="186.4" width="9.2" height="4.3" fill="#7c7c7c"/><rect x="564.87" y="187.6" width="3" height="1.6" fill="#a8a8a8"/><rect x="573.25" y="183.8" width="12.15" height="35.6" fill="#ebebeb"/><rect x="583.90" y="218.2" width="1" height="1" fill="#8c8c8c"/><rect x="575.12" y="186.4" width="9.2" height="4.3" fill="#7c7c7c"/><rect x="578.22" y="187.6" width="3" height="1.6" fill="#a8a8a8"/><rect x="586.60" y="183.8" width="12.15" height="35.6" fill="#ebebeb"/><rect x="597.25" y="218.2" width="1" height="1" fill="#8c8c8c"/><rect x="588.47" y="186.4" width="9.2" height="4.3" fill="#7c7c7c"/><rect x="591.57" y="187.6" width="3" height="1.6" fill="#a8a8a8"/><rect x="599.95" y="183.8" width="12.15" height="35.6" fill="#ebebeb"/><rect x="610.60" y="218.2" width="1" height="1" fill="#8c8c8c"/><rect x="601.82" y="186.4" width="9.2" height="4.3" fill="#7c7c7c"/><rect x="604.92" y="187.6" width="3" height="1.6" fill="#a8a8a8"/><rect x="613.30" y="183.8" width="12.15" height="35.6" fill="#ebebeb"/><rect x="623.95" y="218.2" width="1" height="1" fill="#8c8c8c"/><rect x="615.17" y="186.3" width="9.2" height="4.2" fill="#737373"/><rect x="618.27" y="187.4" width="3" height="1.6" fill="#a6a6a6"/><rect x="615.77" y="195.8" width="8" height="1.4" fill="#9a9a9a"/><rect x="615.77" y="197.6" width="8" height="1.6" fill="#b3b3b3"/><rect x="615.17" y="205" width="9.2" height="3.8" fill="#737373"/><rect x="615.17" y="212.6" width="9.2" height="5" fill="#8b8b8b"/><rect x="626.65" y="183.8" width="12.15" height="35.6" fill="#ebebeb"/><rect x="637.30" y="218.2" width="1" height="1" fill="#8c8c8c"/><rect x="628.52" y="186.3" width="9.2" height="4.2" fill="#737373"/><rect x="631.62" y="187.4" width="3" height="1.6" fill="#a6a6a6"/><rect x="629.12" y="195.8" width="8" height="1.4" fill="#9a9a9a"/><rect x="629.12" y="197.6" width="8" height="1.6" fill="#b3b3b3"/><rect x="628.52" y="205" width="9.2" height="3.8" fill="#737373"/><rect x="628.52" y="212.6" width="9.2" height="5" fill="#8b8b8b"/><rect x="640.00" y="183.8" width="12.15" height="35.6" fill="#ebebeb"/><rect x="650.65" y="218.2" width="1" height="1" fill="#8c8c8c"/><rect x="641.87" y="186.3" width="9.2" height="4.2" fill="#737373"/><rect x="644.97" y="187.4" width="3" height="1.6" fill="#a6a6a6"/><rect x="642.47" y="195.8" width="8" height="1.4" fill="#9a9a9a"/><rect x="642.47" y="197.6" width="8" height="1.6" fill="#b3b3b3"/><rect x="641.87" y="205" width="9.2" height="3.8" fill="#737373"/><rect x="641.87" y="212.6" width="9.2" height="5" fill="#8b8b8b"/><rect x="653.35" y="183.8" width="12.15" height="35.6" fill="#ebebeb"/><rect x="664.00" y="218.2" width="1" height="1" fill="#8c8c8c"/><rect x="655.22" y="186.3" width="9.2" height="4.2" fill="#737373"/><rect x="658.32" y="187.4" width="3" height="1.6" fill="#a6a6a6"/><rect x="655.82" y="195.8" width="8" height="1.4" fill="#9a9a9a"/><rect x="655.82" y="197.6" width="8" height="1.6" fill="#b3b3b3"/><rect x="655.22" y="205" width="9.2" height="3.8" fill="#737373"/><rect x="655.22" y="212.6" width="9.2" height="5" fill="#8b8b8b"/><rect x="666.70" y="183.8" width="12.15" height="35.6" fill="#ebebeb"/><rect x="677.35" y="218.2" width="1" height="1" fill="#8c8c8c"/><rect x="668.57" y="186.3" width="9.2" height="4.2" fill="#737373"/><rect x="671.67" y="187.4" width="3" height="1.6" fill="#a6a6a6"/><rect x="669.17" y="195.8" width="8" height="1.4" fill="#9a9a9a"/><rect x="669.17" y="197.6" width="8" height="1.6" fill="#b3b3b3"/><rect x="668.57" y="205" width="9.2" height="3.8" fill="#737373"/><rect x="668.57" y="212.6" width="9.2" height="5" fill="#8b8b8b"/><rect x="680.05" y="183.8" width="12.15" height="35.6" fill="#ebebeb"/><rect x="690.70" y="218.2" width="1" height="1" fill="#8c8c8c"/><rect x="681.92" y="186.3" width="9.2" height="4.2" fill="#737373"/><rect x="685.02" y="187.4" width="3" height="1.6" fill="#a6a6a6"/><rect x="682.52" y="195.8" width="8" height="1.4" fill="#9a9a9a"/><rect x="682.52" y="197.6" width="8" height="1.6" fill="#b3b3b3"/><rect x="681.92" y="205" width="9.2" height="3.8" fill="#737373"/><rect x="681.92" y="212.6" width="9.2" height="5" fill="#8b8b8b"/><rect x="693.40" y="183.8" width="12.15" height="35.6" fill="#ebebeb"/><rect x="704.05" y="218.2" width="1" height="1" fill="#8c8c8c"/><rect x="695.27" y="186.3" width="9.2" height="4.2" fill="#737373"/><rect x="698.37" y="187.4" width="3" height="1.6" fill="#a6a6a6"/><rect x="695.87" y="195.8" width="8" height="1.4" fill="#9a9a9a"/><rect x="695.87" y="197.6" width="8" height="1.6" fill="#b3b3b3"/><rect x="695.27" y="205" width="9.2" height="3.8" fill="#737373"/><rect x="695.27" y="212.6" width="9.2" height="5" fill="#8b8b8b"/><rect x="706.75" y="183.8" width="12.15" height="35.6" fill="#ebebeb"/><rect x="717.40" y="218.2" width="1" height="1" fill="#8c8c8c"/><rect x="708.62" y="186.3" width="9.2" height="4.2" fill="#737373"/><rect x="711.72" y="187.4" width="3" height="1.6" fill="#a6a6a6"/><rect x="709.22" y="195.8" width="8" height="1.4" fill="#9a9a9a"/><rect x="709.22" y="197.6" width="8" height="1.6" fill="#b3b3b3"/><rect x="708.62" y="205" width="9.2" height="3.8" fill="#737373"/><rect x="708.62" y="212.6" width="9.2" height="5" fill="#8b8b8b"/><rect x="720.10" y="183.8" width="12.15" height="35.6" fill="#ebebeb"/><rect x="730.75" y="218.2" width="1" height="1" fill="#8c8c8c"/><rect x="721.97" y="186.3" width="9.2" height="4.2" fill="#737373"/><rect x="725.07" y="187.4" width="3" height="1.6" fill="#a6a6a6"/><rect x="722.57" y="195.8" width="8" height="1.4" fill="#9a9a9a"/><rect x="722.57" y="197.6" width="8" height="1.6" fill="#b3b3b3"/><rect x="721.97" y="205" width="9.2" height="3.8" fill="#737373"/><rect x="721.97" y="212.6" width="9.2" height="5" fill="#8b8b8b"/><rect x="733.45" y="183.8" width="12.15" height="35.6" fill="#ebebeb"/><rect x="744.10" y="218.2" width="1" height="1" fill="#8c8c8c"/><rect x="735.32" y="186.3" width="9.2" height="4.2" fill="#737373"/><rect x="738.42" y="187.4" width="3" height="1.6" fill="#a6a6a6"/><rect x="735.92" y="195.8" width="8" height="1.4" fill="#9a9a9a"/><rect x="735.92" y="197.6" width="8" height="1.6" fill="#b3b3b3"/><rect x="735.32" y="205" width="9.2" height="3.8" fill="#737373"/><rect x="735.32" y="212.6" width="9.2" height="5" fill="#8b8b8b"/><rect x="746.80" y="183.8" width="12.15" height="35.6" fill="#ebebeb"/><rect x="757.45" y="218.2" width="1" height="1" fill="#8c8c8c"/><rect x="748.67" y="186.3" width="9.2" height="4.2" fill="#737373"/><rect x="751.77" y="187.4" width="3" height="1.6" fill="#a6a6a6"/><rect x="749.27" y="195.8" width="8" height="1.4" fill="#9a9a9a"/><rect x="749.27" y="197.6" width="8" height="1.6" fill="#b3b3b3"/><rect x="748.67" y="205" width="9.2" height="3.8" fill="#737373"/><rect x="748.67" y="212.6" width="9.2" height="5" fill="#8b8b8b"/><rect x="760.15" y="183.8" width="12.15" height="35.6" fill="#ebebeb"/><rect x="770.80" y="218.2" width="1" height="1" fill="#8c8c8c"/><rect x="762.02" y="186.3" width="9.2" height="4.2" fill="#737373"/><rect x="765.12" y="187.4" width="3" height="1.6" fill="#a6a6a6"/><rect x="762.62" y="195.8" width="8" height="1.4" fill="#9a9a9a"/><rect x="762.62" y="197.6" width="8" height="1.6" fill="#b3b3b3"/><rect x="762.02" y="205" width="9.2" height="3.8" fill="#737373"/><rect x="762.02" y="212.6" width="9.2" height="5" fill="#8b8b8b"/><rect x="773.50" y="183.8" width="12.15" height="35.6" fill="#ebebeb"/><rect x="784.15" y="218.2" width="1" height="1" fill="#8c8c8c"/><rect x="775.37" y="186.3" width="9.2" height="4.2" fill="#737373"/><rect x="778.47" y="187.4" width="3" height="1.6" fill="#a6a6a6"/><rect x="775.97" y="195.8" width="8" height="1.4" fill="#9a9a9a"/><rect x="775.97" y="197.6" width="8" height="1.6" fill="#b3b3b3"/><rect x="775.37" y="205" width="9.2" height="3.8" fill="#737373"/><rect x="775.37" y="212.6" width="9.2" height="5" fill="#8b8b8b"/><rect x="786.85" y="183.8" width="12.15" height="35.6" fill="#ebebeb"/><rect x="797.50" y="218.2" width="1" height="1" fill="#8c8c8c"/><rect x="788.72" y="186.3" width="9.2" height="4.2" fill="#737373"/><rect x="791.82" y="187.4" width="3" height="1.6" fill="#a6a6a6"/><rect x="789.32" y="195.8" width="8" height="1.4" fill="#9a9a9a"/><rect x="789.32" y="197.6" width="8" height="1.6" fill="#b3b3b3"/><rect x="788.72" y="205" width="9.2" height="3.8" fill="#737373"/><rect x="788.72" y="212.6" width="9.2" height="5" fill="#8b8b8b"/><rect x="800.20" y="183.8" width="12.15" height="35.6" fill="#ebebeb"/><rect x="810.85" y="218.2" width="1" height="1" fill="#8c8c8c"/><rect x="802.07" y="186.3" width="9.2" height="4.2" fill="#737373"/><rect x="805.17" y="187.4" width="3" height="1.6" fill="#a6a6a6"/><rect x="802.67" y="195.8" width="8" height="1.4" fill="#9a9a9a"/><rect x="802.67" y="197.6" width="8" height="1.6" fill="#b3b3b3"/><rect x="802.07" y="205" width="9.2" height="3.8" fill="#737373"/><rect x="802.07" y="212.6" width="9.2" height="5" fill="#8b8b8b"/><rect x="813.55" y="183.8" width="12.15" height="35.6" fill="#ebebeb"/><rect x="824.20" y="218.2" width="1" height="1" fill="#8c8c8c"/><rect x="815.42" y="186.3" width="9.2" height="4.2" fill="#737373"/><rect x="818.52" y="187.4" width="3" height="1.6" fill="#a6a6a6"/><rect x="816.02" y="195.8" width="8" height="1.4" fill="#9a9a9a"/><rect x="816.02" y="197.6" width="8" height="1.6" fill="#b3b3b3"/><rect x="815.42" y="205" width="9.2" height="3.8" fill="#737373"/><rect x="815.42" y="212.6" width="9.2" height="5" fill="#8b8b8b"/><rect x="826.90" y="183.8" width="12.15" height="35.6" fill="#ebebeb"/><rect x="837.55" y="218.2" width="1" height="1" fill="#8c8c8c"/><rect x="828.77" y="186.3" width="9.2" height="4.2" fill="#737373"/><rect x="831.87" y="187.4" width="3" height="1.6" fill="#a6a6a6"/><rect x="829.37" y="195.8" width="8" height="1.4" fill="#9a9a9a"/><rect x="829.37" y="197.6" width="8" height="1.6" fill="#b3b3b3"/><rect x="828.77" y="205" width="9.2" height="3.8" fill="#737373"/><rect x="828.77" y="212.6" width="9.2" height="5" fill="#8b8b8b"/><rect x="840.25" y="183.8" width="12.15" height="35.6" fill="#ebebeb"/><rect x="850.90" y="218.2" width="1" height="1" fill="#8c8c8c"/><rect x="842.12" y="186.3" width="9.2" height="4.2" fill="#737373"/><rect x="845.22" y="187.4" width="3" height="1.6" fill="#a6a6a6"/><rect x="842.72" y="195.8" width="8" height="1.4" fill="#9a9a9a"/><rect x="842.72" y="197.6" width="8" height="1.6" fill="#b3b3b3"/><rect x="842.12" y="205" width="9.2" height="3.8" fill="#737373"/><rect x="842.12" y="212.6" width="9.2" height="5" fill="#8b8b8b"/><rect x="853.60" y="183.8" width="12.15" height="35.6" fill="#ebebeb"/><rect x="864.25" y="218.2" width="1" height="1" fill="#8c8c8c"/><rect x="855.47" y="186.3" width="9.2" height="4.2" fill="#737373"/><rect x="858.57" y="187.4" width="3" height="1.6" fill="#a6a6a6"/><rect x="856.07" y="195.8" width="8" height="1.4" fill="#9a9a9a"/><rect x="856.07" y="197.6" width="8" height="1.6" fill="#b3b3b3"/><rect x="855.47" y="205" width="9.2" height="3.8" fill="#737373"/><rect x="855.47" y="212.6" width="9.2" height="5" fill="#8b8b8b"/><rect x="866.95" y="183.8" width="12.15" height="35.6" fill="#ebebeb"/><rect x="877.60" y="218.2" width="1" height="1" fill="#8c8c8c"/><rect x="869.12" y="190" width="8.6" height="3.4" fill="#8a8a8a"/><rect x="869.12" y="199" width="8.6" height="4.2" fill="#757575"/><rect x="869.12" y="207.2" width="8.6" height="4" fill="#858585"/><rect x="880.30" y="183.8" width="12.15" height="35.6" fill="#ebebeb"/><rect x="890.95" y="218.2" width="1" height="1" fill="#8c8c8c"/><rect x="882.17" y="186" width="9.2" height="3.6" fill="#707070"/><rect x="882.17" y="193.4" width="9.2" height="4.4" fill="#8a8a8a"/><rect x="882.17" y="211.6" width="9.2" height="4.6" fill="#737373"/><rect x="893.65" y="183.8" width="12.15" height="35.6" fill="#ebebeb"/><rect x="904.30" y="218.2" width="1" height="1" fill="#8c8c8c"/><rect x="895.52" y="186" width="9.2" height="3.6" fill="#707070"/><rect x="895.52" y="193.4" width="9.2" height="4.4" fill="#8a8a8a"/><rect x="895.52" y="211.6" width="9.2" height="4.6" fill="#737373"/><rect x="907.00" y="183.8" width="12.15" height="35.6" fill="#ebebeb"/><rect x="917.65" y="218.2" width="1" height="1" fill="#8c8c8c"/><rect x="908.87" y="185" width="9.2" height="3.6" fill="#6c6c6c"/><rect x="908.87" y="192.2" width="9.2" height="4.6" fill="#8a8a8a"/><rect x="908.87" y="210.6" width="9.2" height="4.6" fill="#737373"/><rect x="920.35" y="183.8" width="12.15" height="35.6" fill="#ebebeb"/><rect x="931.00" y="218.2" width="1" height="1" fill="#8c8c8c"/><rect x="922.22" y="185" width="9.2" height="3.6" fill="#6c6c6c"/><rect x="922.22" y="192.2" width="9.2" height="4.6" fill="#8a8a8a"/><rect x="922.22" y="210.6" width="9.2" height="4.6" fill="#737373"/><rect x="933.70" y="183.8" width="12.15" height="35.6" fill="#ebebeb"/><rect x="944.35" y="218.2" width="1" height="1" fill="#8c8c8c"/><rect x="935.57" y="185" width="9.2" height="3.6" fill="#6c6c6c"/><rect x="935.57" y="192.2" width="9.2" height="4.6" fill="#8a8a8a"/><rect x="935.57" y="210.6" width="9.2" height="4.6" fill="#737373"/><rect x="947.05" y="183.8" width="12.15" height="35.6" fill="#ebebeb"/><rect x="957.70" y="218.2" width="1" height="1" fill="#8c8c8c"/><rect x="948.92" y="185.8" width="9.2" height="2" fill="#6a6a6a"/><rect x="948.92" y="191.6" width="9.2" height="4.4" fill="#858585"/><rect x="948.92" y="209.6" width="9.2" height="4.6" fill="#6e6e6e"/><rect x="960.40" y="183.8" width="12.15" height="35.6" fill="#ebebeb"/><rect x="971.05" y="218.2" width="1" height="1" fill="#8c8c8c"/><rect x="962.27" y="185.8" width="9.2" height="2" fill="#6a6a6a"/><rect x="962.27" y="191.6" width="9.2" height="4.4" fill="#858585"/><rect x="962.27" y="209.6" width="9.2" height="4.6" fill="#6e6e6e"/><rect x="973.75" y="183.8" width="12.15" height="35.6" fill="#ebebeb"/><rect x="984.40" y="218.2" width="1" height="1" fill="#8c8c8c"/><rect x="975.62" y="185.8" width="9.2" height="2" fill="#6a6a6a"/><rect x="975.62" y="191.6" width="9.2" height="4.4" fill="#858585"/><rect x="975.62" y="209.6" width="9.2" height="4.6" fill="#6e6e6e"/><rect x="987.10" y="183.8" width="12.15" height="35.6" fill="#ebebeb"/><rect x="997.75" y="218.2" width="1" height="1" fill="#8c8c8c"/><rect x="988.97" y="185.8" width="9.2" height="2" fill="#6a6a6a"/><rect x="988.97" y="191.6" width="9.2" height="4.4" fill="#858585"/><rect x="988.97" y="209.6" width="9.2" height="4.6" fill="#6e6e6e"/><rect x="1000.45" y="183.8" width="12.15" height="35.6" fill="#ebebeb"/><rect x="1011.10" y="218.2" width="1" height="1" fill="#8c8c8c"/><rect x="1002.32" y="185.8" width="9.2" height="2" fill="#6a6a6a"/><rect x="1002.32" y="191.6" width="9.2" height="4.4" fill="#858585"/><rect x="1002.32" y="209.6" width="9.2" height="4.6" fill="#6e6e6e"/><rect x="1013.80" y="183.8" width="12.15" height="35.6" fill="#ebebeb"/><rect x="1024.45" y="218.2" width="1" height="1" fill="#8c8c8c"/><rect x="1015.67" y="185.8" width="9.2" height="2" fill="#6a6a6a"/><rect x="1015.67" y="191.6" width="9.2" height="4.4" fill="#858585"/><rect x="1015.67" y="209.6" width="9.2" height="4.6" fill="#6e6e6e"/><rect x="1027.15" y="183.8" width="12.15" height="35.6" fill="#ebebeb"/><rect x="1037.80" y="218.2" width="1" height="1" fill="#8c8c8c"/><rect x="1029.02" y="185.8" width="9.2" height="2" fill="#6a6a6a"/><rect x="1029.02" y="191.6" width="9.2" height="4.4" fill="#858585"/><rect x="1029.02" y="209.6" width="9.2" height="4.6" fill="#6e6e6e"/><rect x="1040.50" y="183.8" width="12.15" height="35.6" fill="#ebebeb"/><rect x="1051.15" y="218.2" width="1" height="1" fill="#8c8c8c"/><rect x="1042.38" y="185.8" width="9.2" height="2" fill="#6a6a6a"/><rect x="1042.38" y="191.6" width="9.2" height="4.4" fill="#858585"/><rect x="1042.38" y="209.6" width="9.2" height="4.6" fill="#6e6e6e"/><rect x="1053.85" y="183.8" width="12.15" height="35.6" fill="#ebebeb"/><rect x="1064.50" y="218.2" width="1" height="1" fill="#8c8c8c"/><rect x="1055.72" y="185.8" width="9.2" height="2" fill="#6a6a6a"/><rect x="1058.32" y="186.3" width="4" height="0.9" fill="#d6d6d6"/><rect x="1055.72" y="191.4" width="9.2" height="4.4" fill="#9c9c9c"/><rect x="1057.82" y="192.6" width="5" height="2" fill="#c3c3c3"/><rect x="1055.72" y="199.2" width="9.2" height="4" fill="#5f5f5f"/><rect x="1057.02" y="200.2" width="3.4" height="2" fill="#e2e2e2"/><rect x="1055.72" y="209.4" width="9.2" height="4.8" fill="#666"/><rect x="1059.82" y="210.6" width="3" height="2" fill="#b5b5b5"/><rect x="1067.20" y="183.8" width="12.15" height="35.6" fill="#ebebeb"/><rect x="1077.85" y="218.2" width="1" height="1" fill="#8c8c8c"/><rect x="1069.08" y="185.8" width="9.2" height="2" fill="#6a6a6a"/><rect x="1071.67" y="186.3" width="4" height="0.9" fill="#d6d6d6"/><rect x="1069.08" y="191.4" width="9.2" height="4.4" fill="#9c9c9c"/><rect x="1071.17" y="192.6" width="5" height="2" fill="#c3c3c3"/><rect x="1069.08" y="199.2" width="9.2" height="4" fill="#5f5f5f"/><rect x="1070.38" y="200.2" width="3.4" height="2" fill="#e2e2e2"/><rect x="1069.08" y="209.4" width="9.2" height="4.8" fill="#666"/><rect x="1073.17" y="210.6" width="3" height="2" fill="#b5b5b5"/><rect x="1080.55" y="183.8" width="12.15" height="35.6" fill="#ebebeb"/><rect x="1091.20" y="218.2" width="1" height="1" fill="#8c8c8c"/><rect x="1082.42" y="185.8" width="9.2" height="2" fill="#6a6a6a"/><rect x="1085.02" y="186.3" width="4" height="0.9" fill="#d6d6d6"/><rect x="1082.42" y="191.4" width="9.2" height="4.4" fill="#9c9c9c"/><rect x="1084.52" y="192.6" width="5" height="2" fill="#c3c3c3"/><rect x="1082.42" y="199.2" width="9.2" height="4" fill="#5f5f5f"/><rect x="1083.72" y="200.2" width="3.4" height="2" fill="#e2e2e2"/><rect x="1082.42" y="209.4" width="9.2" height="4.8" fill="#666"/><rect x="1086.52" y="210.6" width="3" height="2" fill="#b5b5b5"/><rect x="1093.90" y="183.8" width="12.15" height="35.6" fill="#ebebeb"/><rect x="1104.55" y="218.2" width="1" height="1" fill="#8c8c8c"/><rect x="1095.77" y="185.8" width="9.2" height="2" fill="#6a6a6a"/><rect x="1098.37" y="186.3" width="4" height="0.9" fill="#d6d6d6"/><rect x="1095.77" y="191.4" width="9.2" height="4.4" fill="#9c9c9c"/><rect x="1097.87" y="192.6" width="5" height="2" fill="#c3c3c3"/><rect x="1095.77" y="199.2" width="9.2" height="4" fill="#5f5f5f"/><rect x="1097.07" y="200.2" width="3.4" height="2" fill="#e2e2e2"/><rect x="1095.77" y="209.4" width="9.2" height="4.8" fill="#666"/><rect x="1099.87" y="210.6" width="3" height="2" fill="#b5b5b5"/><rect x="1107.25" y="183.8" width="12.15" height="35.6" fill="#ebebeb"/><rect x="1117.90" y="218.2" width="1" height="1" fill="#8c8c8c"/><rect x="1109.12" y="185.8" width="9.2" height="2" fill="#6a6a6a"/><rect x="1111.72" y="186.3" width="4" height="0.9" fill="#d6d6d6"/><rect x="1109.12" y="191.4" width="9.2" height="4.4" fill="#9c9c9c"/><rect x="1111.22" y="192.6" width="5" height="2" fill="#c3c3c3"/><rect x="1109.12" y="199.2" width="9.2" height="4" fill="#5f5f5f"/><rect x="1110.42" y="200.2" width="3.4" height="2" fill="#e2e2e2"/><rect x="1109.12" y="209.4" width="9.2" height="4.8" fill="#666"/><rect x="1113.22" y="210.6" width="3" height="2" fill="#b5b5b5"/><rect x="1120.60" y="183.8" width="12.15" height="35.6" fill="#ebebeb"/><rect x="1131.25" y="218.2" width="1" height="1" fill="#8c8c8c"/><rect x="1122.47" y="185.8" width="9.2" height="2" fill="#6a6a6a"/><rect x="1125.07" y="186.3" width="4" height="0.9" fill="#d6d6d6"/><rect x="1122.47" y="191.4" width="9.2" height="4.4" fill="#9c9c9c"/><rect x="1124.57" y="192.6" width="5" height="2" fill="#c3c3c3"/><rect x="1122.47" y="199.2" width="9.2" height="4" fill="#5f5f5f"/><rect x="1123.77" y="200.2" width="3.4" height="2" fill="#e2e2e2"/><rect x="1122.47" y="209.4" width="9.2" height="4.8" fill="#666"/><rect x="1126.57" y="210.6" width="3" height="2" fill="#b5b5b5"/><rect x="1133.95" y="183.8" width="12.15" height="35.6" fill="#ebebeb"/><rect x="1144.60" y="218.2" width="1" height="1" fill="#8c8c8c"/><rect x="1135.83" y="185.8" width="9.2" height="2" fill="#6a6a6a"/><rect x="1138.42" y="186.3" width="4" height="0.9" fill="#d6d6d6"/><rect x="1135.83" y="191.4" width="9.2" height="4.4" fill="#9c9c9c"/><rect x="1137.92" y="192.6" width="5" height="2" fill="#c3c3c3"/><rect x="1135.83" y="199.2" width="9.2" height="4" fill="#5f5f5f"/><rect x="1137.12" y="200.2" width="3.4" height="2" fill="#e2e2e2"/><rect x="1135.83" y="209.4" width="9.2" height="4.8" fill="#666"/><rect x="1139.92" y="210.6" width="3" height="2" fill="#b5b5b5"/><rect x="1147.30" y="183.8" width="12.15" height="35.6" fill="#ebebeb"/><rect x="1157.95" y="218.2" width="1" height="1" fill="#8c8c8c"/><rect x="1149.17" y="185.8" width="9.2" height="2" fill="#6a6a6a"/><rect x="1151.77" y="186.3" width="4" height="0.9" fill="#d6d6d6"/><rect x="1149.17" y="191.4" width="9.2" height="4.4" fill="#9c9c9c"/><rect x="1151.27" y="192.6" width="5" height="2" fill="#c3c3c3"/><rect x="1149.17" y="199.2" width="9.2" height="4" fill="#5f5f5f"/><rect x="1150.47" y="200.2" width="3.4" height="2" fill="#e2e2e2"/><rect x="1149.17" y="209.4" width="9.2" height="4.8" fill="#666"/><rect x="1153.27" y="210.6" width="3" height="2" fill="#b5b5b5"/><rect x="1160.65" y="183.8" width="12.15" height="35.6" fill="#ebebeb"/><rect x="1171.30" y="218.2" width="1" height="1" fill="#8c8c8c"/><rect x="1162.52" y="185.8" width="9.2" height="2" fill="#6a6a6a"/><rect x="1165.12" y="186.3" width="4" height="0.9" fill="#d6d6d6"/><rect x="1162.52" y="191.4" width="9.2" height="4.4" fill="#9c9c9c"/><rect x="1164.62" y="192.6" width="5" height="2" fill="#c3c3c3"/><rect x="1162.52" y="199.2" width="9.2" height="4" fill="#5f5f5f"/><rect x="1163.82" y="200.2" width="3.4" height="2" fill="#e2e2e2"/><rect x="1162.52" y="209.4" width="9.2" height="4.8" fill="#666"/><rect x="1166.62" y="210.6" width="3" height="2" fill="#b5b5b5"/><rect x="1174.00" y="183.8" width="12.15" height="35.6" fill="#ebebeb"/><rect x="1184.65" y="218.2" width="1" height="1" fill="#8c8c8c"/><rect x="1175.88" y="185.8" width="9.2" height="2" fill="#6a6a6a"/><rect x="1178.47" y="186.3" width="4" height="0.9" fill="#d6d6d6"/><rect x="1175.88" y="191.4" width="9.2" height="4.4" fill="#9c9c9c"/><rect x="1177.97" y="192.6" width="5" height="2" fill="#c3c3c3"/><rect x="1175.88" y="199.2" width="9.2" height="4" fill="#5f5f5f"/><rect x="1177.17" y="200.2" width="3.4" height="2" fill="#e2e2e2"/><rect x="1175.88" y="209.4" width="9.2" height="4.8" fill="#666"/><rect x="1179.97" y="210.6" width="3" height="2" fill="#b5b5b5"/><rect x="1187.35" y="183.8" width="12.15" height="35.6" fill="#ebebeb"/><rect x="1198.00" y="218.2" width="1" height="1" fill="#8c8c8c"/><rect x="1189.22" y="185.8" width="9.2" height="2" fill="#6a6a6a"/><rect x="1191.82" y="186.3" width="4" height="0.9" fill="#d6d6d6"/><rect x="1189.22" y="191.4" width="9.2" height="4.4" fill="#9c9c9c"/><rect x="1191.32" y="192.6" width="5" height="2" fill="#c3c3c3"/><rect x="1189.22" y="199.2" width="9.2" height="4" fill="#5f5f5f"/><rect x="1190.52" y="200.2" width="3.4" height="2" fill="#e2e2e2"/><rect x="1189.22" y="209.4" width="9.2" height="4.8" fill="#666"/><rect x="1193.32" y="210.6" width="3" height="2" fill="#b5b5b5"/><rect x="1200.70" y="183.8" width="12.15" height="35.6" fill="#ebebeb"/><rect x="1211.35" y="218.2" width="1" height="1" fill="#8c8c8c"/><rect x="1202.58" y="185.8" width="9.2" height="2" fill="#6a6a6a"/><rect x="1205.17" y="186.3" width="4" height="0.9" fill="#d6d6d6"/><rect x="1202.58" y="191.4" width="9.2" height="4.4" fill="#9c9c9c"/><rect x="1204.67" y="192.6" width="5" height="2" fill="#c3c3c3"/><rect x="1202.58" y="199.2" width="9.2" height="4" fill="#5f5f5f"/><rect x="1203.88" y="200.2" width="3.4" height="2" fill="#e2e2e2"/><rect x="1202.58" y="209.4" width="9.2" height="4.8" fill="#666"/><rect x="1206.67" y="210.6" width="3" height="2" fill="#b5b5b5"/><rect x="1214.05" y="183.8" width="12.15" height="35.6" fill="#ebebeb"/><rect x="1224.70" y="218.2" width="1" height="1" fill="#8c8c8c"/><rect x="1215.92" y="185.8" width="9.2" height="2" fill="#6a6a6a"/><rect x="1218.52" y="186.3" width="4" height="0.9" fill="#d6d6d6"/><rect x="1215.92" y="191.4" width="9.2" height="4.4" fill="#9c9c9c"/><rect x="1218.02" y="192.6" width="5" height="2" fill="#c3c3c3"/><rect x="1215.92" y="199.2" width="9.2" height="4" fill="#5f5f5f"/><rect x="1217.22" y="200.2" width="3.4" height="2" fill="#e2e2e2"/><rect x="1215.92" y="209.4" width="9.2" height="4.8" fill="#666"/><rect x="1220.02" y="210.6" width="3" height="2" fill="#b5b5b5"/><rect x="1227.40" y="183.8" width="12.15" height="35.6" fill="#ebebeb"/><rect x="1238.05" y="218.2" width="1" height="1" fill="#8c8c8c"/><rect x="1229.27" y="185.8" width="9.2" height="2" fill="#6a6a6a"/><rect x="1231.87" y="186.3" width="4" height="0.9" fill="#d6d6d6"/><rect x="1229.27" y="191.4" width="9.2" height="4.4" fill="#9c9c9c"/><rect x="1231.37" y="192.6" width="5" height="2" fill="#c3c3c3"/><rect x="1229.27" y="199.2" width="9.2" height="4" fill="#5f5f5f"/><rect x="1230.57" y="200.2" width="3.4" height="2" fill="#e2e2e2"/><rect x="1229.27" y="209.4" width="9.2" height="4.8" fill="#666"/><rect x="1233.37" y="210.6" width="3" height="2" fill="#b5b5b5"/><rect x="52" y="182.6" width="1176" height="1.2" fill="#efefef"/><rect x="275.8" y="163" width="9.3" height="57" fill="#fff"/><rect x="277.4" y="186.4" width="2.4" height="2.2" fill="#8fcf9f" opacity=".7"/><rect x="282" y="191.2" width="3.4" height="5" fill="#2c2628"/><rect x="285.4" y="191.2" width="4.4" height="5" fill="#6b6468"/><rect x="281.4" y="200.6" width="4" height="1.6" fill="#555a7a"/><rect x="285.4" y="200.6" width="4" height="1.6" fill="#9a9cac"/><text x="110.7" y="108.8" text-anchor="end" font-size="9.6" fill="#8b8b8b" font-family="Liberation Sans, sans-serif" textLength="27.4" lengthAdjust="spacingAndGlyphs">200ms</text><text x="171.9" y="108.8" text-anchor="end" font-size="9.6" fill="#8b8b8b" font-family="Liberation Sans, sans-serif" textLength="27.4" lengthAdjust="spacingAndGlyphs">400ms</text><text x="233.1" y="108.8" text-anchor="end" font-size="9.6" fill="#8b8b8b" font-family="Liberation Sans, sans-serif" textLength="27.4" lengthAdjust="spacingAndGlyphs">600ms</text><text x="294.3" y="108.8" text-anchor="end" font-size="9.6" fill="#8b8b8b" font-family="Liberation Sans, sans-serif" textLength="27.4" lengthAdjust="spacingAndGlyphs">800ms</text><text x="355.5" y="108.8" text-anchor="end" font-size="9.6" fill="#8b8b8b" font-family="Liberation Sans, sans-serif" textLength="32.6" lengthAdjust="spacingAndGlyphs">1000ms</text><text x="416.7" y="108.8" text-anchor="end" font-size="9.6" fill="#8b8b8b" font-family="Liberation Sans, sans-serif" textLength="32.6" lengthAdjust="spacingAndGlyphs">1200ms</text><text x="477.9" y="108.8" text-anchor="end" font-size="9.6" fill="#8b8b8b" font-family="Liberation Sans, sans-serif" textLength="32.6" lengthAdjust="spacingAndGlyphs">1400ms</text><text x="539.1" y="108.8" text-anchor="end" font-size="9.6" fill="#8b8b8b" font-family="Liberation Sans, sans-serif" textLength="32.6" lengthAdjust="spacingAndGlyphs">1600ms</text><text x="600.3" y="108.8" text-anchor="end" font-size="9.6" fill="#8b8b8b" font-family="Liberation Sans, sans-serif" textLength="32.6" lengthAdjust="spacingAndGlyphs">1800ms</text><text x="661.5" y="108.8" text-anchor="end" font-size="9.6" fill="#8b8b8b" font-family="Liberation Sans, sans-serif" textLength="32.6" lengthAdjust="spacingAndGlyphs">2000ms</text><text x="722.7" y="108.8" text-anchor="end" font-size="9.6" fill="#8b8b8b" font-family="Liberation Sans, sans-serif" textLength="32.6" lengthAdjust="spacingAndGlyphs">2200ms</text><text x="783.9" y="108.8" text-anchor="end" font-size="9.6" fill="#8b8b8b" font-family="Liberation Sans, sans-serif" textLength="32.6" lengthAdjust="spacingAndGlyphs">2400ms</text><text x="845.1" y="108.8" text-anchor="end" font-size="9.6" fill="#8b8b8b" font-family="Liberation Sans, sans-serif" textLength="32.6" lengthAdjust="spacingAndGlyphs">2600ms</text><text x="906.3" y="108.8" text-anchor="end" font-size="9.6" fill="#8b8b8b" font-family="Liberation Sans, sans-serif" textLength="32.6" lengthAdjust="spacingAndGlyphs">2800ms</text><text x="967.5" y="108.8" text-anchor="end" font-size="9.6" fill="#8b8b8b" font-family="Liberation Sans, sans-serif" textLength="32.6" lengthAdjust="spacingAndGlyphs">3000ms</text><text x="1028.7" y="108.8" text-anchor="end" font-size="9.6" fill="#8b8b8b" font-family="Liberation Sans, sans-serif" textLength="32.6" lengthAdjust="spacingAndGlyphs">3200ms</text><text x="1089.9" y="108.8" text-anchor="end" font-size="9.6" fill="#8b8b8b" font-family="Liberation Sans, sans-serif" textLength="32.6" lengthAdjust="spacingAndGlyphs">3400ms</text><text x="1151.1" y="108.8" text-anchor="end" font-size="9.6" fill="#8b8b8b" font-family="Liberation Sans, sans-serif" textLength="32.6" lengthAdjust="spacingAndGlyphs">3600ms</text><text x="1212.3" y="108.8" text-anchor="end" font-size="9.6" fill="#8b8b8b" font-family="Liberation Sans, sans-serif" textLength="32.6" lengthAdjust="spacingAndGlyphs">3800ms</text><rect x="274.1" y="99" width="3.4" height="16.6" fill="#9b9b9b" stroke="#fff" stroke-width=".6"/><rect x="283.2" y="99" width="3.4" height="16.6" fill="#9b9b9b" stroke="#fff" stroke-width=".6"/><text x="1225" y="127.7" text-anchor="end" font-size="9.4" font-weight="bold" fill="#9a9a9a" font-family="Liberation Sans, sans-serif">FPS</text><text x="1225" y="148.2" text-anchor="end" font-size="9.4" font-weight="bold" fill="#9a9a9a" font-family="Liberation Sans, sans-serif">CPU</text><text x="1225" y="173.2" text-anchor="end" font-size="9.4" font-weight="bold" fill="#9a9a9a" font-family="Liberation Sans, sans-serif">NET</text></svg></div>
<div id="fl"><div class="g0" style="left:71.2px"></div><div class="g0" style="left:152.9px"></div><div class="g0" style="left:234.5px"></div><div class="g0" style="left:316.2px"></div><div class="g0" style="left:397.8px"></div><div class="g0" style="left:479.5px"></div><div class="g0" style="left:561.1px"></div><div class="g0" style="left:642.8px"></div><div class="g0" style="left:724.4px"></div><div class="g0" style="left:806.1px"></div><div class="g0" style="left:887.7px"></div><div class="g0" style="left:969.4px"></div><div class="g0" style="left:1051.0px"></div><div class="g0" style="left:1132.7px"></div><div class="b" style="left:0.0px;top:1.10px;width:1058.0px;background:#f3dc63;">Connect(TweetContainer) [mount]</div><div class="b" style="left:0.0px;top:16.73px;width:1058.0px;background:#e8d060;">TweetContainer [mount]</div><div class="b" style="left:0.0px;top:32.36px;width:1057.0px;background:#e6bd6a;">Tweet [mount]</div><div class="b" style="left:0.0px;top:47.99px;width:1054.7px;background:#f6dc4e;">Connect(WithheldContentMaybeContainer) [mount]</div><div class="b" style="left:0.0px;top:63.62px;width:1053.7px;background:#efc95a;">WithheldContentMaybeContainer [mount]</div><div class="b" style="left:0.0px;top:79.25px;width:1053.0px;background:#f5a24c;">WithheldContentMaybe [mount]</div><div class="b" style="left:0.0px;top:94.88px;width:1052.0px;background:#f0e455;">GridView [mount]</div><div class="b" style="left:0.0px;top:110.51px;width:1050.0px;background:#e6c266;">View [mount]</div><div class="b" style="left:0.0px;top:126.14px;width:1048.5px;background:#e6c266;">View [mount]</div><div class="b" style="left:0.0px;top:141.77px;width:140.6px;background:#e6c266;">View [mount]</div><div class="b" style="left:0.0px;top:157.40px;width:139.8px;background:#e6c266;">View [mount]</div><div class="b" style="left:0.0px;top:173.03px;width:137.8px;background:#f6cf52;">ScribeNames<i>...</i>ner [mount]</div><div class="b" style="left:0.0px;top:188.66px;width:136.9px;background:#f7c352;">ScribeProvider [mount]</div><div class="b" style="left:0.0px;top:204.29px;width:136.1px;background:#eba563;">ScribeProps<i>...</i>ner [mount]</div><div class="b" style="left:0.0px;top:219.92px;width:135.1px;background:#f6b04e;">Connect(Car<i>...</i>er) [mount]</div><div class="b" style="left:0.0px;top:235.55px;width:134.1px;background:#efbc5a;">CardContainer [mount]</div><div class="b" style="left:0.0px;top:251.18px;width:133.3px;background:#f9d548;">Card [mount]</div><div class="b" style="left:0.0px;top:266.81px;width:132.3px;background:#f2a655;">SummaryLar<i>...</i>rd [mount]</div><div class="b" style="left:0.0px;top:282.44px;width:130.5px;background:#ecd155;">Link [mount]</div><div class="b" style="left:0.0px;top:298.07px;width:129.6px;background:#eaa25f;">ExternalLink [mount]</div><div class="b" style="left:0.0px;top:313.70px;width:128.8px;background:#e8a164;">Box [mount]</div><div class="b" style="left:0.0px;top:329.33px;width:127.8px;background:#e6c266;">View [mount]</div><div class="b" style="left:0.0px;top:344.96px;width:126.8px;background:#f0b556;">Layout [mount]</div><div class="b" style="left:0.0px;top:360.59px;width:125.7px;background:#e6c266;">View [mount]</div><div class="b" style="left:0.0px;top:376.22px;width:35.0px;background:#e6c266;">Vi<i>...</i>t]</div><div class="b" style="left:37.4px;top:376.22px;width:87.5px;background:#e6c266;">View [mount]</div><div class="b" style="left:0.0px;top:391.85px;width:32.9px;background:#f5d450;">M<i>...</i>]</div><div class="b" style="left:52.0px;top:391.85px;width:71.7px;background:#f4b851;">Conte<i>...</i>ount]</div><div class="b" style="left:0.0px;top:407.48px;width:30.9px;background:#eba563;">As<i>...</i>]</div><div class="b" style="left:56.5px;top:407.48px;width:66.2px;background:#e6c266;">View <i>...</i>unt]</div><div class="b" style="left:68.4px;top:423.11px;width:26.7px;background:#f5a04c;">T<i>...</i>]</div><div class="b" style="left:97.2px;top:423.11px;width:24.0px;background:#f5a04c;">T<i>...</i></div><div class="b" style="left:143.2px;top:141.77px;width:903.8px;background:#e9a462;">ScribePropsContainer [mount]</div><div class="b" style="left:150.3px;top:157.40px;width:893.4px;background:#f3df55;">Connect(TweetActionsBarContainer) [mount]</div><div class="b" style="left:153.4px;top:173.03px;width:4.6px;background:#e5b062;padding:0;"></div><div class="b" style="left:160.5px;top:173.03px;width:7.7px;background:#e8b864;padding:0;"></div><div class="b" style="left:172.7px;top:173.03px;width:869.2px;background:#f4a552;">TweetActionsBarContainer [mount]</div><div class="b" style="left:176.7px;top:188.66px;width:22.0px;background:#f7cf50;"></div><div class="b" style="left:202.1px;top:188.66px;width:837.7px;background:#b39a58;">View [mount]</div><div class="b" style="left:234.3px;top:204.29px;width:172.7px;background:#f0d05c;">ReplyTweetAction [mount]</div><div class="b" style="left:414.9px;top:204.29px;width:179.7px;background:#ecc264;">RetweetTweetAction [mount]</div><div class="b" style="left:596.3px;top:204.29px;width:261.4px;background:#e5a568;">LikeTweetAction [mount]</div><div class="b" style="left:867.7px;top:204.29px;width:168.3px;background:#f2c15e;">DMShareTweetAction [mount]</div><div class="b" style="left:239.0px;top:219.92px;width:3.7px;background:#e5a568;padding:0;"></div><div class="b" style="left:257.0px;top:219.92px;width:137.3px;background:#e5b264;">IconReply [mount]</div><div class="b" style="left:424.3px;top:219.92px;width:12.1px;background:#e5a05e;padding:0;"></div><div class="b" style="left:456.1px;top:219.92px;width:127.5px;background:#fbe84c;">IconRetweet [mount]</div><div class="b" style="left:597.4px;top:219.92px;width:14.6px;background:#f8a644;"></div><div class="b" style="left:618.4px;top:219.92px;width:8.6px;background:#f7d24e;padding:0;"></div><div class="b" style="left:648.0px;top:219.92px;width:161.9px;background:#bf8a4a;">IconHeart [mount]</div><div class="b" style="left:882.2px;top:219.92px;width:6.6px;background:#e9aa57;padding:0;"></div><div class="b" style="left:913.8px;top:219.92px;width:116.9px;background:#e5a56a;">IconMessa<i>...</i>r [mount]</div><div class="b" style="left:1106.3px;top:1.10px;width:59.6px;background:#f3dc63;">C<i>...</i>n<i>...</i>nt]</div><div class="b" style="left:1107.8px;top:16.73px;width:13.1px;background:#f0b454;padding:0;"></div><div class="b" style="left:1125.0px;top:16.73px;width:4.3px;background:#f6a246;padding:0;"></div><div class="b" style="left:1133.2px;top:16.73px;width:32.7px;background:#e8d060;">T<i>...</i>]</div><div class="b" style="left:1137.0px;top:32.36px;width:7.0px;background:#e8ad5c;padding:0;"></div><div class="b" style="left:1147.0px;top:32.36px;width:18.9px;background:#e6bd6a;"></div><div class="b" style="left:1154.4px;top:47.99px;width:11.5px;background:#f3d654;padding:0;"></div><div class="abs" style="left:0;top:1px;width:1166px;height:15.2px;background:rgba(255,255,255,.5)"></div><div class="g" style="left:71.2px"></div><div class="rl" style="left:6.9px;top:2px">734 ms</div><div class="g" style="left:152.9px"></div><div class="rl" style="left:88.6px;top:2px">736 ms</div><div class="g" style="left:234.5px"></div><div class="rl" style="left:170.2px;top:2px">738 ms</div><div class="g" style="left:316.2px"></div><div class="rl" style="left:251.9px;top:2px">740 ms</div><div class="g" style="left:397.8px"></div><div class="rl" style="left:333.5px;top:2px">742 ms</div><div class="g" style="left:479.5px"></div><div class="rl" style="left:415.2px;top:2px">744 ms</div><div class="g" style="left:561.1px"></div><div class="rl" style="left:496.8px;top:2px">746 ms</div><div class="g" style="left:642.8px"></div><div class="rl" style="left:578.5px;top:2px">748 ms</div><div class="g" style="left:724.4px"></div><div class="rl" style="left:660.1px;top:2px">750 ms</div><div class="g" style="left:806.1px"></div><div class="rl" style="left:741.8px;top:2px">752 ms</div><div class="g" style="left:887.7px"></div><div class="rl" style="left:823.4px;top:2px">754 ms</div><div class="g" style="left:969.4px"></div><div class="rl" style="left:905.1px;top:2px">756 ms</div><div class="g" style="left:1051.0px"></div><div class="rl" style="left:986.7px;top:2px">758 ms</div><div class="g" style="left:1132.7px"></div><div class="rl" style="left:1068.4px;top:2px">760 ms</div><div class="abs" style="left:1166px;top:0;width:10px;height:432px;background:#fff"></div><div class="abs" style="left:1167.3px;top:21.6px;width:7.2px;height:48.2px;border-radius:3.6px;background:#bcbcbc"></div><div class="abs" style="left:0;top:0;width:1176px;height:1.1px;background:#a8a8a8"></div></div>
<svg class="abs" style="left:0;top:0" width="1176" height="652" viewBox="52 29 1176 652"><rect x="229.8" y="394.45" width="957.5" height="100.2" rx="10" ry="10" fill="none" stroke="#f20d0d" stroke-width="5.5" stroke-linecap="round" stroke-dasharray="10.4 11.67" stroke-dashoffset="11.51"/></svg><div class="abs" style="left:516.9px;top:481.8px;font-size:21.3px;line-height:25px;font-weight:bold;color:#e81212;white-space:nowrap;letter-spacing:0.29px">20.52ms for 4 SVG icons</div><div class="tip" style="left:990.1px;top:389.5px;width:130.1px;height:20.4px"><span style="left:7.2px;top:4.0px;color:#1b8a1b;letter-spacing:0.04px">20.52ms</span><span style="left:55.0px;top:4.0px;letter-spacing:-0.02px">View [mount]</span></div><div class="tip" style="left:780.2px;top:429.4px;width:149.0px;height:19.4px"><span style="left:7.8px;top:3.5px;color:#1b8a1b;letter-spacing:0.04px">3.99ms</span><span style="left:49.1px;top:3.5px;letter-spacing:0.02px">IconHeart [mount]</span></div>
<div id="bot">
<div class="abs" style="left:4.2px;top:2.5px;width:56.6px;height:23px;background:#fff;border:1.1px solid #d0d0d0;border-bottom-color:#d8d8d8"></div>
<div class="bt" style="left:8.9px;letter-spacing:-0.61px;color:#333">Summary</div>
<div class="bt" style="left:66.1px;letter-spacing:-0.27px;color:#5a5a5a">Bottom-Up</div>
<div class="bt" style="left:131.1px;letter-spacing:-0.66px;color:#5a5a5a">Call Tree</div>
<div class="bt" style="left:183.5px;letter-spacing:-0.49px;color:#5a5a5a">Event Log</div>
<div class="abs" style="left:0;top:24.3px;width:1176px;height:1.1px;background:#d2d2d2"></div>
</div>
</div>
</body></html>
